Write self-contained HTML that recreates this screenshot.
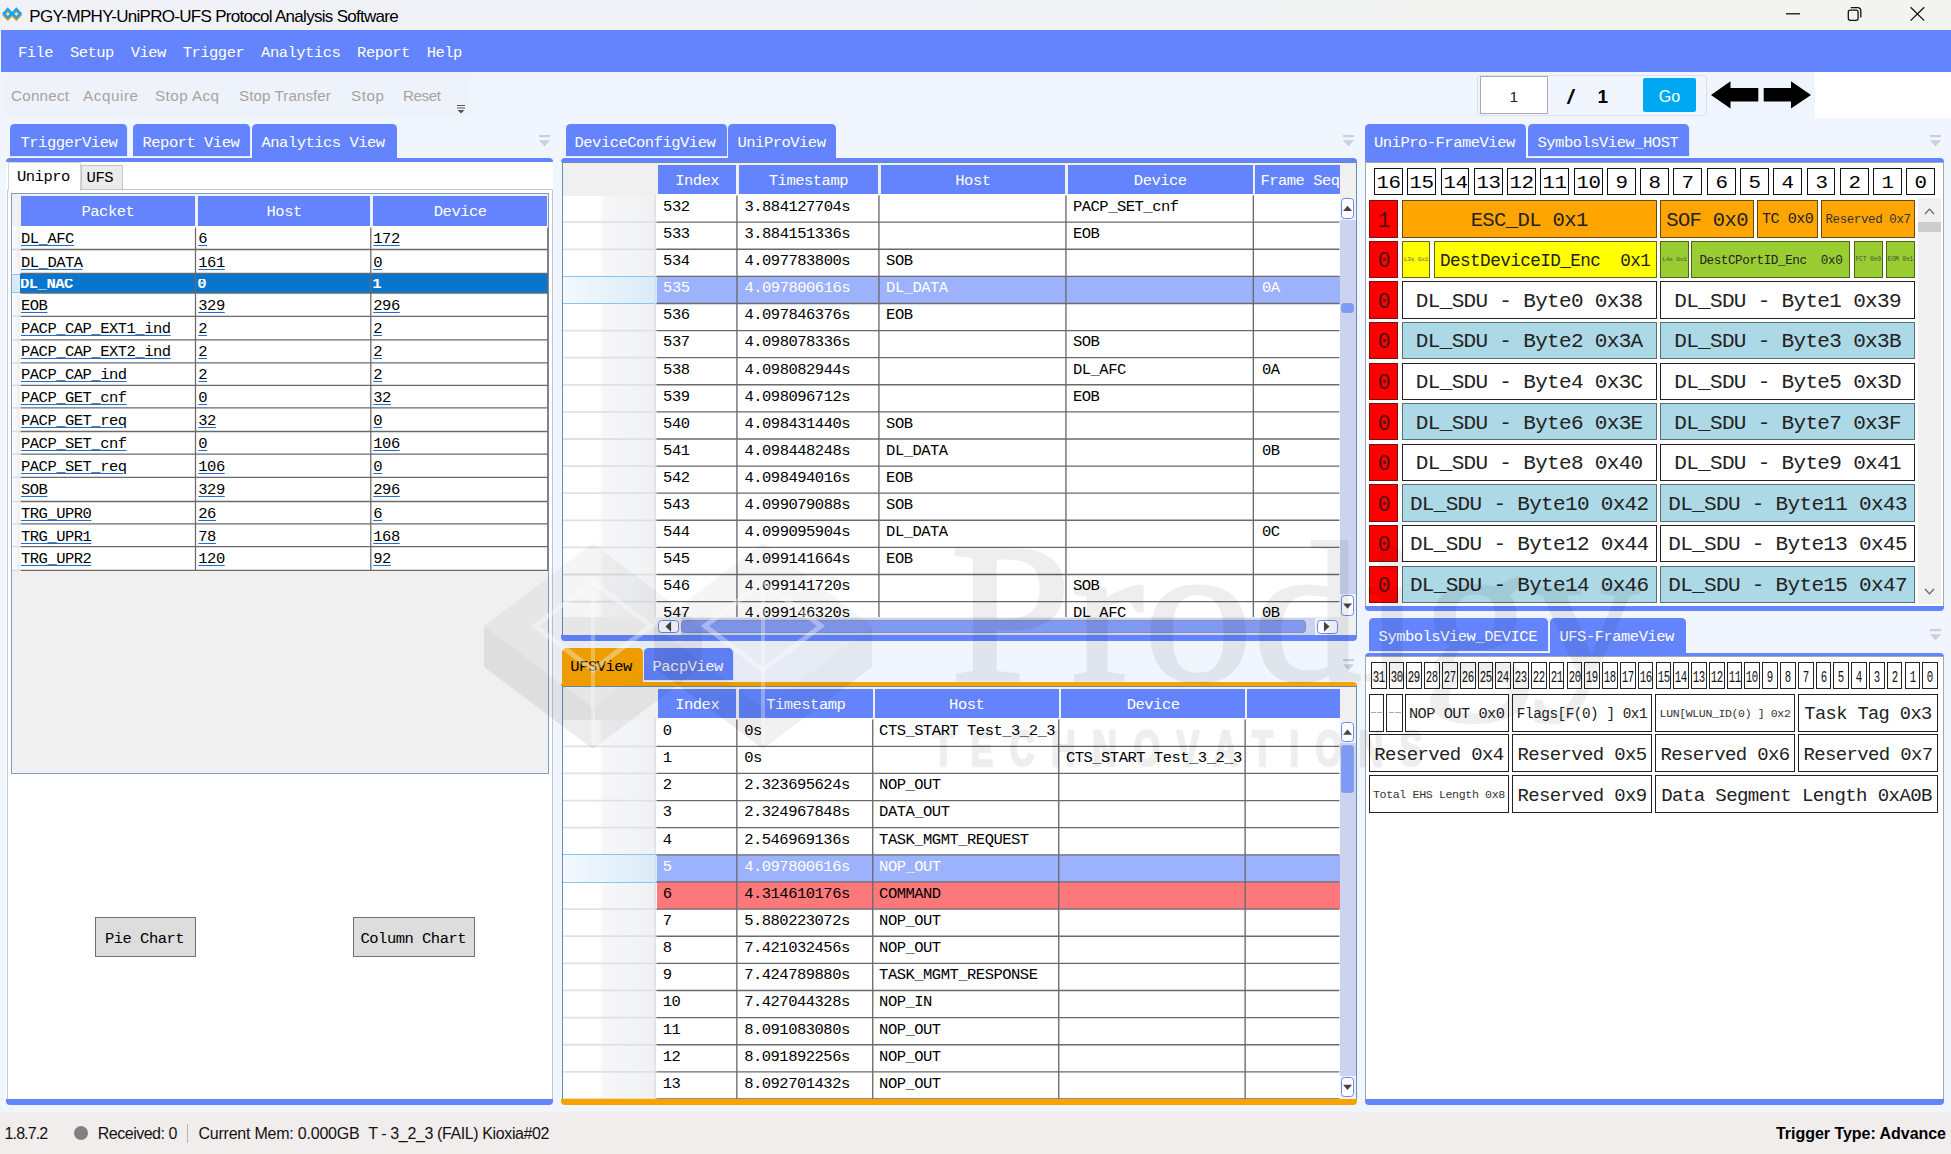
<!DOCTYPE html>
<html><head><meta charset="utf-8"><title>PGY-MPHY-UniPRO-UFS Protocol Analysis Software</title>
<style>
html,body{margin:0;padding:0;}
body{width:1951px;height:1154px;overflow:hidden;background:#f1f5fe;position:relative;font-family:"Liberation Mono",monospace;}
div{position:absolute;box-sizing:border-box;}
.m{font-family:"Liberation Mono",monospace;white-space:pre;}
.s{font-family:"Liberation Sans",sans-serif;white-space:pre;}
svg{position:absolute;overflow:visible;}
</style></head><body>
<div style="left:0.00px;top:0.00px;width:1951.00px;height:30.00px;background:linear-gradient(90deg,#f0f2f8 0%,#f0f2f8 45%,#f3f4ef 85%,#f3f4ef 100%);"></div>
<svg style="left:0;top:0" width="26" height="30" viewBox="0 0 26 30">
<g fill="none" stroke-width="2.4" stroke-linejoin="miter">
<path d="M7.8 10.9 L11.9 15.2 L7.8 19.5 L3.7 15.2 Z M16.4 10.9 L20.5 15.2 L16.4 19.5 L12.3 15.2 Z" stroke="#ff9a1f"/>
<path d="M7.8 9.1 L11.9 13.4 L7.8 17.7 L3.7 13.4 Z M16.4 9.1 L20.5 13.4 L16.4 17.7 L12.3 13.4 Z" stroke="#12a6f5"/>
</g></svg>
<div class="s" style="left:29.30px;top:5.90px;height:22px;line-height:22px;font-size:17.00px;letter-spacing:-0.705px;color:#000;">PGY-MPHY-UniPRO-UFS Protocol Analysis Software</div>
<svg style="left:1780px;top:0" width="171" height="30" viewBox="0 0 171 30">
<g fill="none" stroke="#111" stroke-width="1.3">
<path d="M6 13.8 H20"/>
<rect x="68.3" y="10.1" width="9.8" height="10.2" rx="2"/>
<path d="M70.8 7.6 H77.6 Q80.8 7.6 80.8 10.8 V17.6"/>
<path d="M130.6 7.3 L144.2 20.6 M144.2 7.3 L130.6 20.6"/>
</g></svg>
<div style="left:1.00px;top:30.00px;width:1950.00px;height:42.00px;background:#6384fd;"></div>
<div class="m" style="left:17.90px;top:42.98px;height:20px;line-height:20px;font-size:15.49px;letter-spacing:-0.496px;color:#fff;">File</div>
<div class="m" style="left:69.90px;top:42.98px;height:20px;line-height:20px;font-size:15.49px;letter-spacing:-0.496px;color:#fff;">Setup</div>
<div class="m" style="left:130.70px;top:42.98px;height:20px;line-height:20px;font-size:15.49px;letter-spacing:-0.496px;color:#fff;">View</div>
<div class="m" style="left:182.70px;top:42.98px;height:20px;line-height:20px;font-size:15.49px;letter-spacing:-0.496px;color:#fff;">Trigger</div>
<div class="m" style="left:261.10px;top:42.98px;height:20px;line-height:20px;font-size:15.49px;letter-spacing:-0.496px;color:#fff;">Analytics</div>
<div class="m" style="left:357.10px;top:42.98px;height:20px;line-height:20px;font-size:15.49px;letter-spacing:-0.496px;color:#fff;">Report</div>
<div class="m" style="left:426.70px;top:42.98px;height:20px;line-height:20px;font-size:15.49px;letter-spacing:-0.496px;color:#fff;">Help</div>
<div style="left:0.00px;top:72.00px;width:1951.00px;height:46.00px;background:#f0f4fd;"></div>
<div style="left:5.00px;top:73.00px;width:464.00px;height:44.00px;background:#eef3fb;"></div>
<div class="s" style="left:11.00px;top:86.50px;height:18px;line-height:18px;font-size:15.20px;letter-spacing:0.231px;color:#a8a29f;">Connect</div>
<div class="s" style="left:83.00px;top:86.50px;height:18px;line-height:18px;font-size:15.20px;letter-spacing:0.577px;color:#a8a29f;">Acquire</div>
<div class="s" style="left:155.00px;top:86.50px;height:18px;line-height:18px;font-size:15.20px;letter-spacing:0.451px;color:#a8a29f;">Stop Acq</div>
<div class="s" style="left:239.00px;top:86.50px;height:18px;line-height:18px;font-size:15.20px;letter-spacing:0.063px;color:#a8a29f;">Stop Transfer</div>
<div class="s" style="left:351.00px;top:86.50px;height:18px;line-height:18px;font-size:15.20px;letter-spacing:0.577px;color:#a8a29f;">Stop</div>
<div class="s" style="left:403.00px;top:86.50px;height:18px;line-height:18px;font-size:15.20px;letter-spacing:-0.427px;color:#a8a29f;">Reset</div>
<svg style="left:456.3px;top:104.3px" width="10" height="10" viewBox="0 0 10 10"><path d="M1 1.5H9M1 4H9" stroke="#555" stroke-width="1.2" fill="none"/><path d="M1.5 6 H8.5 L5 9.5Z" fill="#555"/></svg>
<div style="left:1477.00px;top:74.50px;width:230.00px;height:41.00px;border:1px solid #dcdfe6;border-radius:4px;background:#f1f5fe;"></div>
<div style="left:1480.00px;top:76.40px;width:67.50px;height:37.40px;background:#fff;border:1px solid #ababab;"></div>
<div class="s" style="left:1480.00px;top:87.30px;height:20px;line-height:20px;font-size:15.50px;letter-spacing:0.000px;color:#222;width:67.50px;text-align:center;">1</div>
<div class="s" style="left:1567.50px;top:83.60px;height:26px;line-height:26px;font-size:21.00px;letter-spacing:0.000px;color:#000;font-weight:bold;font-style:italic;">/</div>
<div class="s" style="left:1597.50px;top:84.60px;height:24px;line-height:24px;font-size:19.00px;letter-spacing:0.000px;color:#000;font-weight:bold;">1</div>
<div style="left:1643.00px;top:78.40px;width:53.00px;height:33.30px;background:#00a8f3;border-radius:2px;"></div>
<div class="s" style="left:1643.00px;top:86.50px;height:20px;line-height:20px;font-size:16.00px;letter-spacing:0.000px;color:#fff;width:53.00px;text-align:center;">Go</div>
<svg style="left:1710px;top:80px" width="102" height="30" viewBox="0 0 102 30">
<path d="M1 15 L20.5 1.3 V8 H48.3 V21.6 H20.5 V28.6 Z" fill="#000"/>
<path d="M101 15 L81 1.3 V8 H53.7 V21.6 H81 V28.6 Z" fill="#000"/></svg>
<div style="left:1815.00px;top:72.00px;width:136.00px;height:46.00px;background:#fff;"></div>
<div style="left:6.00px;top:158.00px;width:547.00px;height:4.30px;background:#6384fd;border-radius:4px 4px 0 0;"></div>
<div style="left:6.40px;top:161.80px;width:546.20px;height:937.20px;background:#fff;"></div>
<div style="left:6.00px;top:1099.00px;width:547.00px;height:5.50px;background:#6384fd;border-radius:0 0 4px 4px;"></div>
<div style="left:7.20px;top:189.20px;width:545.60px;height:909.80px;border:1.4px solid #c6c6c6;border-bottom:none;border-radius:2px 2px 0 0;"></div>
<div style="left:10.00px;top:124.00px;width:118.30px;height:33.20px;background:#6384fd;border-radius:4.5px 5px 0 0;border-right:1px solid #e3eafd;border-bottom:1.3px solid #e3eafd;"></div>
<div class="m" style="left:20.50px;top:132.58px;height:20px;line-height:20px;font-size:15.49px;letter-spacing:-0.496px;color:#fff;">TriggerView</div>
<div style="left:133.00px;top:124.00px;width:118.00px;height:33.20px;background:#6384fd;border-radius:4.5px 5px 0 0;border-right:1px solid #e3eafd;border-bottom:1.3px solid #e3eafd;"></div>
<div class="m" style="left:142.50px;top:132.58px;height:20px;line-height:20px;font-size:15.49px;letter-spacing:-0.496px;color:#fff;">Report View</div>
<div style="left:252.00px;top:124.00px;width:144.50px;height:36.00px;background:#6384fd;border-radius:4.5px 4.5px 0 0;"></div>
<div class="m" style="left:261.50px;top:132.58px;height:20px;line-height:20px;font-size:15.49px;letter-spacing:-0.496px;color:#fff;">Analytics View</div>
<svg style="left:538.9px;top:134.9px" width="12" height="12" viewBox="0 0 12 12"><rect x="0" y="0" width="11" height="2.2" fill="#c9cfdb"/><path d="M0 5.2 H11 L5.5 11.2Z" fill="#c9cfdb"/></svg>
<div style="left:7.50px;top:162.30px;width:73.50px;height:28.70px;background:#fff;border:1px solid #d5d5d5;border-bottom:none;"></div>
<div class="m" style="left:17.00px;top:166.98px;height:20px;line-height:20px;font-size:15.49px;letter-spacing:-0.496px;color:#000;">Unipro</div>
<div style="left:81.00px;top:165.20px;width:41.50px;height:25.00px;background:#ebebeb;border:1px solid #c4c4c4;"></div>
<div class="m" style="left:86.60px;top:168.18px;height:20px;line-height:20px;font-size:15.49px;letter-spacing:-0.496px;color:#000;">UFS</div>
<div style="left:11.00px;top:193.00px;width:538.00px;height:580.50px;background:#f0f0f0;border:1px solid #7b9bcb;"></div>
<div style="left:20.80px;top:196.00px;width:174.20px;height:29.80px;background:#6384fd;"></div>
<div class="m" style="left:20.80px;top:201.58px;height:20px;line-height:20px;font-size:15.49px;letter-spacing:-0.496px;color:#fff;width:174.20px;text-align:center;">Packet</div>
<div style="left:198.00px;top:196.00px;width:172.30px;height:29.80px;background:#6384fd;"></div>
<div class="m" style="left:198.00px;top:201.58px;height:20px;line-height:20px;font-size:15.49px;letter-spacing:-0.496px;color:#fff;width:172.30px;text-align:center;">Host</div>
<div style="left:373.00px;top:196.00px;width:174.40px;height:29.80px;background:#6384fd;"></div>
<div class="m" style="left:373.00px;top:201.58px;height:20px;line-height:20px;font-size:15.49px;letter-spacing:-0.496px;color:#fff;width:174.40px;text-align:center;">Device</div>
<div style="left:12.00px;top:226.00px;width:536.00px;height:345.00px;background:#fff;"></div>
<div style="left:12.00px;top:226.00px;width:8.30px;height:345.00px;background:linear-gradient(90deg,#fff,#eee);"></div>
<div class="m" style="left:21.00px;top:229.28px;height:20px;line-height:20px;font-size:15.49px;letter-spacing:-0.496px;color:#000;text-decoration:underline;text-decoration-color:#1a6fd0;text-decoration-thickness:1.2px;text-underline-offset:1.5px;">DL_AFC</div>
<div class="m" style="left:198.30px;top:229.28px;height:20px;line-height:20px;font-size:15.49px;letter-spacing:-0.496px;color:#000;text-decoration:underline;text-decoration-color:#1a6fd0;text-decoration-thickness:1.2px;text-underline-offset:1.5px;">6</div>
<div class="m" style="left:373.30px;top:229.28px;height:20px;line-height:20px;font-size:15.49px;letter-spacing:-0.496px;color:#000;text-decoration:underline;text-decoration-color:#1a6fd0;text-decoration-thickness:1.2px;text-underline-offset:1.5px;">172</div>
<div class="m" style="left:21.00px;top:252.58px;height:20px;line-height:20px;font-size:15.49px;letter-spacing:-0.496px;color:#000;text-decoration:underline;text-decoration-color:#1a6fd0;text-decoration-thickness:1.2px;text-underline-offset:1.5px;">DL_DATA</div>
<div class="m" style="left:198.30px;top:252.58px;height:20px;line-height:20px;font-size:15.49px;letter-spacing:-0.496px;color:#000;text-decoration:underline;text-decoration-color:#1a6fd0;text-decoration-thickness:1.2px;text-underline-offset:1.5px;">161</div>
<div class="m" style="left:373.30px;top:252.58px;height:20px;line-height:20px;font-size:15.49px;letter-spacing:-0.496px;color:#000;text-decoration:underline;text-decoration-color:#1a6fd0;text-decoration-thickness:1.2px;text-underline-offset:1.5px;">0</div>
<div style="left:12.00px;top:274.00px;width:536.00px;height:18.80px;background:#0a75cd;"></div>
<div style="left:12.00px;top:274.00px;width:8.30px;height:18.80px;background:#d9ebf9;border-top:1px solid #8ac7ee;border-bottom:1px solid #8ac7ee;"></div>
<div style="left:20px;top:279.4px;width:170px;height:12.4px;overflow:hidden;">
<div class="m" style="left:0.00px;top:-5.42px;height:20px;line-height:20px;font-size:15.49px;letter-spacing:-0.496px;color:#fff;font-weight:bold;">DL_NAC</div>
</div>
<div style="left:197.3px;top:279.4px;width:170px;height:12.4px;overflow:hidden;">
<div class="m" style="left:0.00px;top:-5.42px;height:20px;line-height:20px;font-size:15.49px;letter-spacing:-0.496px;color:#fff;font-weight:bold;">0</div>
</div>
<div style="left:372.3px;top:279.4px;width:170px;height:12.4px;overflow:hidden;">
<div class="m" style="left:0.00px;top:-5.42px;height:20px;line-height:20px;font-size:15.49px;letter-spacing:-0.496px;color:#fff;font-weight:bold;">1</div>
</div>
<div class="m" style="left:21.00px;top:296.28px;height:20px;line-height:20px;font-size:15.49px;letter-spacing:-0.496px;color:#000;text-decoration:underline;text-decoration-color:#1a6fd0;text-decoration-thickness:1.2px;text-underline-offset:1.5px;">EOB</div>
<div class="m" style="left:198.30px;top:296.28px;height:20px;line-height:20px;font-size:15.49px;letter-spacing:-0.496px;color:#000;text-decoration:underline;text-decoration-color:#1a6fd0;text-decoration-thickness:1.2px;text-underline-offset:1.5px;">329</div>
<div class="m" style="left:373.30px;top:296.28px;height:20px;line-height:20px;font-size:15.49px;letter-spacing:-0.496px;color:#000;text-decoration:underline;text-decoration-color:#1a6fd0;text-decoration-thickness:1.2px;text-underline-offset:1.5px;">296</div>
<div class="m" style="left:21.00px;top:319.28px;height:20px;line-height:20px;font-size:15.49px;letter-spacing:-0.496px;color:#000;text-decoration:underline;text-decoration-color:#1a6fd0;text-decoration-thickness:1.2px;text-underline-offset:1.5px;">PACP_CAP_EXT1_ind</div>
<div class="m" style="left:198.30px;top:319.28px;height:20px;line-height:20px;font-size:15.49px;letter-spacing:-0.496px;color:#000;text-decoration:underline;text-decoration-color:#1a6fd0;text-decoration-thickness:1.2px;text-underline-offset:1.5px;">2</div>
<div class="m" style="left:373.30px;top:319.28px;height:20px;line-height:20px;font-size:15.49px;letter-spacing:-0.496px;color:#000;text-decoration:underline;text-decoration-color:#1a6fd0;text-decoration-thickness:1.2px;text-underline-offset:1.5px;">2</div>
<div class="m" style="left:21.00px;top:342.28px;height:20px;line-height:20px;font-size:15.49px;letter-spacing:-0.496px;color:#000;text-decoration:underline;text-decoration-color:#1a6fd0;text-decoration-thickness:1.2px;text-underline-offset:1.5px;">PACP_CAP_EXT2_ind</div>
<div class="m" style="left:198.30px;top:342.28px;height:20px;line-height:20px;font-size:15.49px;letter-spacing:-0.496px;color:#000;text-decoration:underline;text-decoration-color:#1a6fd0;text-decoration-thickness:1.2px;text-underline-offset:1.5px;">2</div>
<div class="m" style="left:373.30px;top:342.28px;height:20px;line-height:20px;font-size:15.49px;letter-spacing:-0.496px;color:#000;text-decoration:underline;text-decoration-color:#1a6fd0;text-decoration-thickness:1.2px;text-underline-offset:1.5px;">2</div>
<div class="m" style="left:21.00px;top:365.18px;height:20px;line-height:20px;font-size:15.49px;letter-spacing:-0.496px;color:#000;text-decoration:underline;text-decoration-color:#1a6fd0;text-decoration-thickness:1.2px;text-underline-offset:1.5px;">PACP_CAP_ind</div>
<div class="m" style="left:198.30px;top:365.18px;height:20px;line-height:20px;font-size:15.49px;letter-spacing:-0.496px;color:#000;text-decoration:underline;text-decoration-color:#1a6fd0;text-decoration-thickness:1.2px;text-underline-offset:1.5px;">2</div>
<div class="m" style="left:373.30px;top:365.18px;height:20px;line-height:20px;font-size:15.49px;letter-spacing:-0.496px;color:#000;text-decoration:underline;text-decoration-color:#1a6fd0;text-decoration-thickness:1.2px;text-underline-offset:1.5px;">2</div>
<div class="m" style="left:21.00px;top:388.08px;height:20px;line-height:20px;font-size:15.49px;letter-spacing:-0.496px;color:#000;text-decoration:underline;text-decoration-color:#1a6fd0;text-decoration-thickness:1.2px;text-underline-offset:1.5px;">PACP_GET_cnf</div>
<div class="m" style="left:198.30px;top:388.08px;height:20px;line-height:20px;font-size:15.49px;letter-spacing:-0.496px;color:#000;text-decoration:underline;text-decoration-color:#1a6fd0;text-decoration-thickness:1.2px;text-underline-offset:1.5px;">0</div>
<div class="m" style="left:373.30px;top:388.08px;height:20px;line-height:20px;font-size:15.49px;letter-spacing:-0.496px;color:#000;text-decoration:underline;text-decoration-color:#1a6fd0;text-decoration-thickness:1.2px;text-underline-offset:1.5px;">32</div>
<div class="m" style="left:21.00px;top:411.18px;height:20px;line-height:20px;font-size:15.49px;letter-spacing:-0.496px;color:#000;text-decoration:underline;text-decoration-color:#1a6fd0;text-decoration-thickness:1.2px;text-underline-offset:1.5px;">PACP_GET_req</div>
<div class="m" style="left:198.30px;top:411.18px;height:20px;line-height:20px;font-size:15.49px;letter-spacing:-0.496px;color:#000;text-decoration:underline;text-decoration-color:#1a6fd0;text-decoration-thickness:1.2px;text-underline-offset:1.5px;">32</div>
<div class="m" style="left:373.30px;top:411.18px;height:20px;line-height:20px;font-size:15.49px;letter-spacing:-0.496px;color:#000;text-decoration:underline;text-decoration-color:#1a6fd0;text-decoration-thickness:1.2px;text-underline-offset:1.5px;">0</div>
<div class="m" style="left:21.00px;top:434.18px;height:20px;line-height:20px;font-size:15.49px;letter-spacing:-0.496px;color:#000;text-decoration:underline;text-decoration-color:#1a6fd0;text-decoration-thickness:1.2px;text-underline-offset:1.5px;">PACP_SET_cnf</div>
<div class="m" style="left:198.30px;top:434.18px;height:20px;line-height:20px;font-size:15.49px;letter-spacing:-0.496px;color:#000;text-decoration:underline;text-decoration-color:#1a6fd0;text-decoration-thickness:1.2px;text-underline-offset:1.5px;">0</div>
<div class="m" style="left:373.30px;top:434.18px;height:20px;line-height:20px;font-size:15.49px;letter-spacing:-0.496px;color:#000;text-decoration:underline;text-decoration-color:#1a6fd0;text-decoration-thickness:1.2px;text-underline-offset:1.5px;">106</div>
<div class="m" style="left:21.00px;top:457.18px;height:20px;line-height:20px;font-size:15.49px;letter-spacing:-0.496px;color:#000;text-decoration:underline;text-decoration-color:#1a6fd0;text-decoration-thickness:1.2px;text-underline-offset:1.5px;">PACP_SET_req</div>
<div class="m" style="left:198.30px;top:457.18px;height:20px;line-height:20px;font-size:15.49px;letter-spacing:-0.496px;color:#000;text-decoration:underline;text-decoration-color:#1a6fd0;text-decoration-thickness:1.2px;text-underline-offset:1.5px;">106</div>
<div class="m" style="left:373.30px;top:457.18px;height:20px;line-height:20px;font-size:15.49px;letter-spacing:-0.496px;color:#000;text-decoration:underline;text-decoration-color:#1a6fd0;text-decoration-thickness:1.2px;text-underline-offset:1.5px;">0</div>
<div class="m" style="left:21.00px;top:480.18px;height:20px;line-height:20px;font-size:15.49px;letter-spacing:-0.496px;color:#000;text-decoration:underline;text-decoration-color:#1a6fd0;text-decoration-thickness:1.2px;text-underline-offset:1.5px;">SOB</div>
<div class="m" style="left:198.30px;top:480.18px;height:20px;line-height:20px;font-size:15.49px;letter-spacing:-0.496px;color:#000;text-decoration:underline;text-decoration-color:#1a6fd0;text-decoration-thickness:1.2px;text-underline-offset:1.5px;">329</div>
<div class="m" style="left:373.30px;top:480.18px;height:20px;line-height:20px;font-size:15.49px;letter-spacing:-0.496px;color:#000;text-decoration:underline;text-decoration-color:#1a6fd0;text-decoration-thickness:1.2px;text-underline-offset:1.5px;">296</div>
<div class="m" style="left:21.00px;top:503.98px;height:20px;line-height:20px;font-size:15.49px;letter-spacing:-0.496px;color:#000;text-decoration:underline;text-decoration-color:#1a6fd0;text-decoration-thickness:1.2px;text-underline-offset:1.5px;">TRG_UPR0</div>
<div class="m" style="left:198.30px;top:503.98px;height:20px;line-height:20px;font-size:15.49px;letter-spacing:-0.496px;color:#000;text-decoration:underline;text-decoration-color:#1a6fd0;text-decoration-thickness:1.2px;text-underline-offset:1.5px;">26</div>
<div class="m" style="left:373.30px;top:503.98px;height:20px;line-height:20px;font-size:15.49px;letter-spacing:-0.496px;color:#000;text-decoration:underline;text-decoration-color:#1a6fd0;text-decoration-thickness:1.2px;text-underline-offset:1.5px;">6</div>
<div class="m" style="left:21.00px;top:526.58px;height:20px;line-height:20px;font-size:15.49px;letter-spacing:-0.496px;color:#000;text-decoration:underline;text-decoration-color:#1a6fd0;text-decoration-thickness:1.2px;text-underline-offset:1.5px;">TRG_UPR1</div>
<div class="m" style="left:198.30px;top:526.58px;height:20px;line-height:20px;font-size:15.49px;letter-spacing:-0.496px;color:#000;text-decoration:underline;text-decoration-color:#1a6fd0;text-decoration-thickness:1.2px;text-underline-offset:1.5px;">78</div>
<div class="m" style="left:373.30px;top:526.58px;height:20px;line-height:20px;font-size:15.49px;letter-spacing:-0.496px;color:#000;text-decoration:underline;text-decoration-color:#1a6fd0;text-decoration-thickness:1.2px;text-underline-offset:1.5px;">168</div>
<div class="m" style="left:21.00px;top:549.48px;height:20px;line-height:20px;font-size:15.49px;letter-spacing:-0.496px;color:#000;text-decoration:underline;text-decoration-color:#1a6fd0;text-decoration-thickness:1.2px;text-underline-offset:1.5px;">TRG_UPR2</div>
<div class="m" style="left:198.30px;top:549.48px;height:20px;line-height:20px;font-size:15.49px;letter-spacing:-0.496px;color:#000;text-decoration:underline;text-decoration-color:#1a6fd0;text-decoration-thickness:1.2px;text-underline-offset:1.5px;">120</div>
<div class="m" style="left:373.30px;top:549.48px;height:20px;line-height:20px;font-size:15.49px;letter-spacing:-0.496px;color:#000;text-decoration:underline;text-decoration-color:#1a6fd0;text-decoration-thickness:1.2px;text-underline-offset:1.5px;">92</div>
<svg style="left:0;top:0" width="560" height="600" viewBox="0 0 560 600"><line x1="20.5" y1="249.50" x2="548" y2="249.50" stroke="#6a6a6a" stroke-width="1.3"/><line x1="12" y1="249.50" x2="20.3" y2="249.50" stroke="#dcdcdc" stroke-width="1.5"/><line x1="20.5" y1="273.30" x2="548" y2="273.30" stroke="#6a6a6a" stroke-width="1.3"/><line x1="20.5" y1="293.10" x2="548" y2="293.10" stroke="#6a6a6a" stroke-width="1.3"/><line x1="20.5" y1="316.30" x2="548" y2="316.30" stroke="#6a6a6a" stroke-width="1.3"/><line x1="12" y1="316.30" x2="20.3" y2="316.30" stroke="#dcdcdc" stroke-width="1.5"/><line x1="20.5" y1="339.90" x2="548" y2="339.90" stroke="#6a6a6a" stroke-width="1.3"/><line x1="12" y1="339.90" x2="20.3" y2="339.90" stroke="#dcdcdc" stroke-width="1.5"/><line x1="20.5" y1="362.80" x2="548" y2="362.80" stroke="#6a6a6a" stroke-width="1.3"/><line x1="12" y1="362.80" x2="20.3" y2="362.80" stroke="#dcdcdc" stroke-width="1.5"/><line x1="20.5" y1="385.30" x2="548" y2="385.30" stroke="#6a6a6a" stroke-width="1.3"/><line x1="12" y1="385.30" x2="20.3" y2="385.30" stroke="#dcdcdc" stroke-width="1.5"/><line x1="20.5" y1="407.90" x2="548" y2="407.90" stroke="#6a6a6a" stroke-width="1.3"/><line x1="12" y1="407.90" x2="20.3" y2="407.90" stroke="#dcdcdc" stroke-width="1.5"/><line x1="20.5" y1="431.50" x2="548" y2="431.50" stroke="#6a6a6a" stroke-width="1.3"/><line x1="12" y1="431.50" x2="20.3" y2="431.50" stroke="#dcdcdc" stroke-width="1.5"/><line x1="20.5" y1="454.20" x2="548" y2="454.20" stroke="#6a6a6a" stroke-width="1.3"/><line x1="12" y1="454.20" x2="20.3" y2="454.20" stroke="#dcdcdc" stroke-width="1.5"/><line x1="20.5" y1="477.30" x2="548" y2="477.30" stroke="#6a6a6a" stroke-width="1.3"/><line x1="12" y1="477.30" x2="20.3" y2="477.30" stroke="#dcdcdc" stroke-width="1.5"/><line x1="20.5" y1="501.50" x2="548" y2="501.50" stroke="#6a6a6a" stroke-width="1.3"/><line x1="12" y1="501.50" x2="20.3" y2="501.50" stroke="#dcdcdc" stroke-width="1.5"/><line x1="20.5" y1="523.80" x2="548" y2="523.80" stroke="#6a6a6a" stroke-width="1.3"/><line x1="12" y1="523.80" x2="20.3" y2="523.80" stroke="#dcdcdc" stroke-width="1.5"/><line x1="20.5" y1="546.60" x2="548" y2="546.60" stroke="#6a6a6a" stroke-width="1.3"/><line x1="12" y1="546.60" x2="20.3" y2="546.60" stroke="#dcdcdc" stroke-width="1.5"/><line x1="20.5" y1="570.30" x2="548" y2="570.30" stroke="#6a6a6a" stroke-width="1.3"/><line x1="12" y1="570.30" x2="20.3" y2="570.30" stroke="#dcdcdc" stroke-width="1.5"/><line x1="195.5" y1="227.5" x2="195.5" y2="570.6" stroke="#6a6a6a" stroke-width="1.25"/><line x1="370.8" y1="227.5" x2="370.8" y2="570.6" stroke="#6a6a6a" stroke-width="1.25"/><line x1="547.8" y1="227.5" x2="547.8" y2="570.6" stroke="#6a6a6a" stroke-width="1.25"/></svg>
<div style="left:95.00px;top:916.80px;width:101.00px;height:40.00px;background:#dddddd;border:1px solid #707070;"></div>
<div class="m" style="left:94.00px;top:928.78px;height:20px;line-height:20px;font-size:15.49px;letter-spacing:-0.496px;color:#000;width:101.00px;text-align:center;">Pie Chart</div>
<div style="left:353.40px;top:916.80px;width:121.40px;height:40.00px;background:#dddddd;border:1px solid #707070;"></div>
<div class="m" style="left:352.60px;top:928.78px;height:20px;line-height:20px;font-size:15.49px;letter-spacing:-0.496px;color:#000;width:121.40px;text-align:center;">Column Chart</div>
<div style="left:561.40px;top:158.00px;width:795.80px;height:4.30px;background:#6384fd;border-radius:4px 4px 0 0;"></div>
<div style="left:561.80px;top:161.80px;width:795.00px;height:473.20px;background:#fff;border:1.3px solid #688caf;border-bottom:none;"></div>
<div style="left:561.40px;top:635.00px;width:795.80px;height:5.50px;background:#6384fd;border-radius:0 0 4px 4px;"></div>
<div style="left:566.00px;top:124.00px;width:161.80px;height:33.20px;background:#6384fd;border-radius:4.5px 5px 0 0;border-right:1px solid #e3eafd;border-bottom:1.3px solid #e3eafd;"></div>
<div class="m" style="left:574.50px;top:132.58px;height:20px;line-height:20px;font-size:15.49px;letter-spacing:-0.496px;color:#fff;">DeviceConfigView</div>
<div style="left:728.40px;top:124.00px;width:107.80px;height:36.00px;background:#6384fd;border-radius:4.5px 4.5px 0 0;"></div>
<div class="m" style="left:737.50px;top:132.58px;height:20px;line-height:20px;font-size:15.49px;letter-spacing:-0.496px;color:#fff;">UniProView</div>
<svg style="left:1343.1px;top:134.9px" width="12" height="12" viewBox="0 0 12 12"><rect x="0" y="0" width="11" height="2.2" fill="#c9cfdb"/><path d="M0 5.2 H11 L5.5 11.2Z" fill="#c9cfdb"/></svg>
<div style="left:563.30px;top:163.00px;width:792.70px;height:31.70px;background:#f0f0f0;"></div>
<div style="left:658.00px;top:165.20px;width:78.30px;height:28.50px;background:#6384fd;overflow:hidden;"></div>
<div class="m" style="left:658.00px;top:170.73px;height:20px;line-height:20px;font-size:15.49px;letter-spacing:-0.496px;color:#fff;width:78.30px;text-align:center;">Index</div>
<div style="left:739.00px;top:165.20px;width:138.80px;height:28.50px;background:#6384fd;overflow:hidden;"></div>
<div class="m" style="left:739.00px;top:170.73px;height:20px;line-height:20px;font-size:15.49px;letter-spacing:-0.496px;color:#fff;width:138.80px;text-align:center;">Timestamp</div>
<div style="left:881.00px;top:165.20px;width:183.80px;height:28.50px;background:#6384fd;overflow:hidden;"></div>
<div class="m" style="left:881.00px;top:170.73px;height:20px;line-height:20px;font-size:15.49px;letter-spacing:-0.496px;color:#fff;width:183.80px;text-align:center;">Host</div>
<div style="left:1068.00px;top:165.20px;width:184.50px;height:28.50px;background:#6384fd;overflow:hidden;"></div>
<div class="m" style="left:1068.00px;top:170.73px;height:20px;line-height:20px;font-size:15.49px;letter-spacing:-0.496px;color:#fff;width:184.50px;text-align:center;">Device</div>
<div style="left:1255.40px;top:165.20px;width:84.20px;height:28.50px;background:#6384fd;overflow:hidden;"></div>
<div class="m" style="left:1260.40px;top:170.73px;height:20px;line-height:20px;font-size:15.49px;letter-spacing:-0.496px;color:#fff;width:79.20px;text-align:left;overflow:hidden;">Frame Seq</div>
<div style="left:563.3px;top:194.10px;width:776.4px;height:423.20px;overflow:hidden;background:#fff;">
<div style="left:0.00px;top:0.00px;width:92.40px;height:423.20px;background:linear-gradient(90deg,#fff 0%,#fff 38%,#f6f6f8 44%,#f3f4f6 75%,#f0f0f2 100%);"></div>
<div style="left:0.00px;top:0.00px;width:93.00px;height:2.20px;background:#f0f0f0;"></div>
<div style="left:93.40px;top:82.40px;width:683.00px;height:27.10px;background:#9db2fc;"></div>
<div style="left:0.00px;top:81.80px;width:93.40px;height:28.30px;background:linear-gradient(90deg,#f3f9fd,#d9ebf8);border-top:1.3px solid #86c6ee;border-bottom:1.3px solid #86c6ee;"></div>
<svg style="left:0;top:0" width="776.4" height="423.20" viewBox="0 0 776.4 423.20"><line x1="0" y1="28.20" x2="92.4" y2="28.20" stroke="#e1e1e1" stroke-width="1.8"/><line x1="93.4" y1="28.20" x2="776.4" y2="28.20" stroke="#6a6a6a" stroke-width="1.35"/><line x1="0" y1="55.30" x2="92.4" y2="55.30" stroke="#e1e1e1" stroke-width="1.8"/><line x1="93.4" y1="55.30" x2="776.4" y2="55.30" stroke="#6a6a6a" stroke-width="1.35"/><line x1="93.4" y1="82.40" x2="776.4" y2="82.40" stroke="#6a6a6a" stroke-width="1.35"/><line x1="93.4" y1="109.50" x2="776.4" y2="109.50" stroke="#6a6a6a" stroke-width="1.35"/><line x1="0" y1="136.60" x2="92.4" y2="136.60" stroke="#e1e1e1" stroke-width="1.8"/><line x1="93.4" y1="136.60" x2="776.4" y2="136.60" stroke="#6a6a6a" stroke-width="1.35"/><line x1="0" y1="163.70" x2="92.4" y2="163.70" stroke="#e1e1e1" stroke-width="1.8"/><line x1="93.4" y1="163.70" x2="776.4" y2="163.70" stroke="#6a6a6a" stroke-width="1.35"/><line x1="0" y1="190.80" x2="92.4" y2="190.80" stroke="#e1e1e1" stroke-width="1.8"/><line x1="93.4" y1="190.80" x2="776.4" y2="190.80" stroke="#6a6a6a" stroke-width="1.35"/><line x1="0" y1="217.90" x2="92.4" y2="217.90" stroke="#e1e1e1" stroke-width="1.8"/><line x1="93.4" y1="217.90" x2="776.4" y2="217.90" stroke="#6a6a6a" stroke-width="1.35"/><line x1="0" y1="245.00" x2="92.4" y2="245.00" stroke="#e1e1e1" stroke-width="1.8"/><line x1="93.4" y1="245.00" x2="776.4" y2="245.00" stroke="#6a6a6a" stroke-width="1.35"/><line x1="0" y1="272.10" x2="92.4" y2="272.10" stroke="#e1e1e1" stroke-width="1.8"/><line x1="93.4" y1="272.10" x2="776.4" y2="272.10" stroke="#6a6a6a" stroke-width="1.35"/><line x1="0" y1="299.20" x2="92.4" y2="299.20" stroke="#e1e1e1" stroke-width="1.8"/><line x1="93.4" y1="299.20" x2="776.4" y2="299.20" stroke="#6a6a6a" stroke-width="1.35"/><line x1="0" y1="326.30" x2="92.4" y2="326.30" stroke="#e1e1e1" stroke-width="1.8"/><line x1="93.4" y1="326.30" x2="776.4" y2="326.30" stroke="#6a6a6a" stroke-width="1.35"/><line x1="0" y1="353.40" x2="92.4" y2="353.40" stroke="#e1e1e1" stroke-width="1.8"/><line x1="93.4" y1="353.40" x2="776.4" y2="353.40" stroke="#6a6a6a" stroke-width="1.35"/><line x1="0" y1="380.50" x2="92.4" y2="380.50" stroke="#e1e1e1" stroke-width="1.8"/><line x1="93.4" y1="380.50" x2="776.4" y2="380.50" stroke="#6a6a6a" stroke-width="1.35"/><line x1="0" y1="407.60" x2="92.4" y2="407.60" stroke="#e1e1e1" stroke-width="1.8"/><line x1="93.4" y1="407.60" x2="776.4" y2="407.60" stroke="#6a6a6a" stroke-width="1.35"/><line x1="0" y1="434.70" x2="92.4" y2="434.70" stroke="#e1e1e1" stroke-width="1.8"/><line x1="93.4" y1="434.70" x2="776.4" y2="434.70" stroke="#6a6a6a" stroke-width="1.35"/><line x1="173.95" y1="1.5" x2="173.95" y2="423.20" stroke="#6a6a6a" stroke-width="1.35"/><line x1="315.95" y1="1.5" x2="315.95" y2="423.20" stroke="#6a6a6a" stroke-width="1.35"/><line x1="502.95" y1="1.5" x2="502.95" y2="423.20" stroke="#6a6a6a" stroke-width="1.35"/><line x1="690.35" y1="1.5" x2="690.35" y2="423.20" stroke="#6a6a6a" stroke-width="1.35"/><line x1="92.10000000000001" y1="0" x2="92.10000000000001" y2="423.20" stroke="#d8d8da" stroke-width="1"/></svg>
<div style="left:99.80px;top:-0.15px;width:71.70px;height:24px;overflow:hidden;">
<div class="m" style="left:0.00px;top:2.98px;height:20px;line-height:20px;font-size:15.49px;letter-spacing:-0.496px;color:#000;">532</div>
</div>
<div style="left:181.20px;top:-0.15px;width:131.80px;height:24px;overflow:hidden;">
<div class="m" style="left:0.00px;top:2.98px;height:20px;line-height:20px;font-size:15.49px;letter-spacing:-0.496px;color:#000;">3.884127704s</div>
</div>
<div style="left:509.70px;top:-0.15px;width:178.00px;height:24px;overflow:hidden;">
<div class="m" style="left:0.00px;top:2.98px;height:20px;line-height:20px;font-size:15.49px;letter-spacing:-0.496px;color:#000;">PACP_SET_cnf</div>
</div>
<div style="left:99.80px;top:26.95px;width:71.70px;height:24px;overflow:hidden;">
<div class="m" style="left:0.00px;top:2.98px;height:20px;line-height:20px;font-size:15.49px;letter-spacing:-0.496px;color:#000;">533</div>
</div>
<div style="left:181.20px;top:26.95px;width:131.80px;height:24px;overflow:hidden;">
<div class="m" style="left:0.00px;top:2.98px;height:20px;line-height:20px;font-size:15.49px;letter-spacing:-0.496px;color:#000;">3.884151336s</div>
</div>
<div style="left:509.70px;top:26.95px;width:178.00px;height:24px;overflow:hidden;">
<div class="m" style="left:0.00px;top:2.98px;height:20px;line-height:20px;font-size:15.49px;letter-spacing:-0.496px;color:#000;">EOB</div>
</div>
<div style="left:99.80px;top:54.05px;width:71.70px;height:24px;overflow:hidden;">
<div class="m" style="left:0.00px;top:2.98px;height:20px;line-height:20px;font-size:15.49px;letter-spacing:-0.496px;color:#000;">534</div>
</div>
<div style="left:181.20px;top:54.05px;width:131.80px;height:24px;overflow:hidden;">
<div class="m" style="left:0.00px;top:2.98px;height:20px;line-height:20px;font-size:15.49px;letter-spacing:-0.496px;color:#000;">4.097783800s</div>
</div>
<div style="left:322.80px;top:54.05px;width:177.20px;height:24px;overflow:hidden;">
<div class="m" style="left:0.00px;top:2.98px;height:20px;line-height:20px;font-size:15.49px;letter-spacing:-0.496px;color:#000;">SOB</div>
</div>
<div style="left:99.80px;top:81.15px;width:71.70px;height:24px;overflow:hidden;">
<div class="m" style="left:0.00px;top:2.98px;height:20px;line-height:20px;font-size:15.49px;letter-spacing:-0.496px;color:#fff;">535</div>
</div>
<div style="left:181.20px;top:81.15px;width:131.80px;height:24px;overflow:hidden;">
<div class="m" style="left:0.00px;top:2.98px;height:20px;line-height:20px;font-size:15.49px;letter-spacing:-0.496px;color:#fff;">4.097800616s</div>
</div>
<div style="left:322.80px;top:81.15px;width:177.20px;height:24px;overflow:hidden;">
<div class="m" style="left:0.00px;top:2.98px;height:20px;line-height:20px;font-size:15.49px;letter-spacing:-0.496px;color:#fff;">DL_DATA</div>
</div>
<div style="left:698.60px;top:81.15px;width:76.20px;height:24px;overflow:hidden;">
<div class="m" style="left:0.00px;top:2.98px;height:20px;line-height:20px;font-size:15.49px;letter-spacing:-0.496px;color:#fff;">0A</div>
</div>
<div style="left:99.80px;top:108.25px;width:71.70px;height:24px;overflow:hidden;">
<div class="m" style="left:0.00px;top:2.98px;height:20px;line-height:20px;font-size:15.49px;letter-spacing:-0.496px;color:#000;">536</div>
</div>
<div style="left:181.20px;top:108.25px;width:131.80px;height:24px;overflow:hidden;">
<div class="m" style="left:0.00px;top:2.98px;height:20px;line-height:20px;font-size:15.49px;letter-spacing:-0.496px;color:#000;">4.097846376s</div>
</div>
<div style="left:322.80px;top:108.25px;width:177.20px;height:24px;overflow:hidden;">
<div class="m" style="left:0.00px;top:2.98px;height:20px;line-height:20px;font-size:15.49px;letter-spacing:-0.496px;color:#000;">EOB</div>
</div>
<div style="left:99.80px;top:135.35px;width:71.70px;height:24px;overflow:hidden;">
<div class="m" style="left:0.00px;top:2.98px;height:20px;line-height:20px;font-size:15.49px;letter-spacing:-0.496px;color:#000;">537</div>
</div>
<div style="left:181.20px;top:135.35px;width:131.80px;height:24px;overflow:hidden;">
<div class="m" style="left:0.00px;top:2.98px;height:20px;line-height:20px;font-size:15.49px;letter-spacing:-0.496px;color:#000;">4.098078336s</div>
</div>
<div style="left:509.70px;top:135.35px;width:178.00px;height:24px;overflow:hidden;">
<div class="m" style="left:0.00px;top:2.98px;height:20px;line-height:20px;font-size:15.49px;letter-spacing:-0.496px;color:#000;">SOB</div>
</div>
<div style="left:99.80px;top:162.45px;width:71.70px;height:24px;overflow:hidden;">
<div class="m" style="left:0.00px;top:2.98px;height:20px;line-height:20px;font-size:15.49px;letter-spacing:-0.496px;color:#000;">538</div>
</div>
<div style="left:181.20px;top:162.45px;width:131.80px;height:24px;overflow:hidden;">
<div class="m" style="left:0.00px;top:2.98px;height:20px;line-height:20px;font-size:15.49px;letter-spacing:-0.496px;color:#000;">4.098082944s</div>
</div>
<div style="left:509.70px;top:162.45px;width:178.00px;height:24px;overflow:hidden;">
<div class="m" style="left:0.00px;top:2.98px;height:20px;line-height:20px;font-size:15.49px;letter-spacing:-0.496px;color:#000;">DL_AFC</div>
</div>
<div style="left:698.60px;top:162.45px;width:76.20px;height:24px;overflow:hidden;">
<div class="m" style="left:0.00px;top:2.98px;height:20px;line-height:20px;font-size:15.49px;letter-spacing:-0.496px;color:#000;">0A</div>
</div>
<div style="left:99.80px;top:189.55px;width:71.70px;height:24px;overflow:hidden;">
<div class="m" style="left:0.00px;top:2.98px;height:20px;line-height:20px;font-size:15.49px;letter-spacing:-0.496px;color:#000;">539</div>
</div>
<div style="left:181.20px;top:189.55px;width:131.80px;height:24px;overflow:hidden;">
<div class="m" style="left:0.00px;top:2.98px;height:20px;line-height:20px;font-size:15.49px;letter-spacing:-0.496px;color:#000;">4.098096712s</div>
</div>
<div style="left:509.70px;top:189.55px;width:178.00px;height:24px;overflow:hidden;">
<div class="m" style="left:0.00px;top:2.98px;height:20px;line-height:20px;font-size:15.49px;letter-spacing:-0.496px;color:#000;">EOB</div>
</div>
<div style="left:99.80px;top:216.65px;width:71.70px;height:24px;overflow:hidden;">
<div class="m" style="left:0.00px;top:2.98px;height:20px;line-height:20px;font-size:15.49px;letter-spacing:-0.496px;color:#000;">540</div>
</div>
<div style="left:181.20px;top:216.65px;width:131.80px;height:24px;overflow:hidden;">
<div class="m" style="left:0.00px;top:2.98px;height:20px;line-height:20px;font-size:15.49px;letter-spacing:-0.496px;color:#000;">4.098431440s</div>
</div>
<div style="left:322.80px;top:216.65px;width:177.20px;height:24px;overflow:hidden;">
<div class="m" style="left:0.00px;top:2.98px;height:20px;line-height:20px;font-size:15.49px;letter-spacing:-0.496px;color:#000;">SOB</div>
</div>
<div style="left:99.80px;top:243.75px;width:71.70px;height:24px;overflow:hidden;">
<div class="m" style="left:0.00px;top:2.98px;height:20px;line-height:20px;font-size:15.49px;letter-spacing:-0.496px;color:#000;">541</div>
</div>
<div style="left:181.20px;top:243.75px;width:131.80px;height:24px;overflow:hidden;">
<div class="m" style="left:0.00px;top:2.98px;height:20px;line-height:20px;font-size:15.49px;letter-spacing:-0.496px;color:#000;">4.098448248s</div>
</div>
<div style="left:322.80px;top:243.75px;width:177.20px;height:24px;overflow:hidden;">
<div class="m" style="left:0.00px;top:2.98px;height:20px;line-height:20px;font-size:15.49px;letter-spacing:-0.496px;color:#000;">DL_DATA</div>
</div>
<div style="left:698.60px;top:243.75px;width:76.20px;height:24px;overflow:hidden;">
<div class="m" style="left:0.00px;top:2.98px;height:20px;line-height:20px;font-size:15.49px;letter-spacing:-0.496px;color:#000;">0B</div>
</div>
<div style="left:99.80px;top:270.85px;width:71.70px;height:24px;overflow:hidden;">
<div class="m" style="left:0.00px;top:2.98px;height:20px;line-height:20px;font-size:15.49px;letter-spacing:-0.496px;color:#000;">542</div>
</div>
<div style="left:181.20px;top:270.85px;width:131.80px;height:24px;overflow:hidden;">
<div class="m" style="left:0.00px;top:2.98px;height:20px;line-height:20px;font-size:15.49px;letter-spacing:-0.496px;color:#000;">4.098494016s</div>
</div>
<div style="left:322.80px;top:270.85px;width:177.20px;height:24px;overflow:hidden;">
<div class="m" style="left:0.00px;top:2.98px;height:20px;line-height:20px;font-size:15.49px;letter-spacing:-0.496px;color:#000;">EOB</div>
</div>
<div style="left:99.80px;top:297.95px;width:71.70px;height:24px;overflow:hidden;">
<div class="m" style="left:0.00px;top:2.98px;height:20px;line-height:20px;font-size:15.49px;letter-spacing:-0.496px;color:#000;">543</div>
</div>
<div style="left:181.20px;top:297.95px;width:131.80px;height:24px;overflow:hidden;">
<div class="m" style="left:0.00px;top:2.98px;height:20px;line-height:20px;font-size:15.49px;letter-spacing:-0.496px;color:#000;">4.099079088s</div>
</div>
<div style="left:322.80px;top:297.95px;width:177.20px;height:24px;overflow:hidden;">
<div class="m" style="left:0.00px;top:2.98px;height:20px;line-height:20px;font-size:15.49px;letter-spacing:-0.496px;color:#000;">SOB</div>
</div>
<div style="left:99.80px;top:325.05px;width:71.70px;height:24px;overflow:hidden;">
<div class="m" style="left:0.00px;top:2.98px;height:20px;line-height:20px;font-size:15.49px;letter-spacing:-0.496px;color:#000;">544</div>
</div>
<div style="left:181.20px;top:325.05px;width:131.80px;height:24px;overflow:hidden;">
<div class="m" style="left:0.00px;top:2.98px;height:20px;line-height:20px;font-size:15.49px;letter-spacing:-0.496px;color:#000;">4.099095904s</div>
</div>
<div style="left:322.80px;top:325.05px;width:177.20px;height:24px;overflow:hidden;">
<div class="m" style="left:0.00px;top:2.98px;height:20px;line-height:20px;font-size:15.49px;letter-spacing:-0.496px;color:#000;">DL_DATA</div>
</div>
<div style="left:698.60px;top:325.05px;width:76.20px;height:24px;overflow:hidden;">
<div class="m" style="left:0.00px;top:2.98px;height:20px;line-height:20px;font-size:15.49px;letter-spacing:-0.496px;color:#000;">0C</div>
</div>
<div style="left:99.80px;top:352.15px;width:71.70px;height:24px;overflow:hidden;">
<div class="m" style="left:0.00px;top:2.98px;height:20px;line-height:20px;font-size:15.49px;letter-spacing:-0.496px;color:#000;">545</div>
</div>
<div style="left:181.20px;top:352.15px;width:131.80px;height:24px;overflow:hidden;">
<div class="m" style="left:0.00px;top:2.98px;height:20px;line-height:20px;font-size:15.49px;letter-spacing:-0.496px;color:#000;">4.099141664s</div>
</div>
<div style="left:322.80px;top:352.15px;width:177.20px;height:24px;overflow:hidden;">
<div class="m" style="left:0.00px;top:2.98px;height:20px;line-height:20px;font-size:15.49px;letter-spacing:-0.496px;color:#000;">EOB</div>
</div>
<div style="left:99.80px;top:379.25px;width:71.70px;height:24px;overflow:hidden;">
<div class="m" style="left:0.00px;top:2.98px;height:20px;line-height:20px;font-size:15.49px;letter-spacing:-0.496px;color:#000;">546</div>
</div>
<div style="left:181.20px;top:379.25px;width:131.80px;height:24px;overflow:hidden;">
<div class="m" style="left:0.00px;top:2.98px;height:20px;line-height:20px;font-size:15.49px;letter-spacing:-0.496px;color:#000;">4.099141720s</div>
</div>
<div style="left:509.70px;top:379.25px;width:178.00px;height:24px;overflow:hidden;">
<div class="m" style="left:0.00px;top:2.98px;height:20px;line-height:20px;font-size:15.49px;letter-spacing:-0.496px;color:#000;">SOB</div>
</div>
<div style="left:99.80px;top:406.35px;width:71.70px;height:24px;overflow:hidden;">
<div class="m" style="left:0.00px;top:2.98px;height:20px;line-height:20px;font-size:15.49px;letter-spacing:-0.496px;color:#000;">547</div>
</div>
<div style="left:181.20px;top:406.35px;width:131.80px;height:24px;overflow:hidden;">
<div class="m" style="left:0.00px;top:2.98px;height:20px;line-height:20px;font-size:15.49px;letter-spacing:-0.496px;color:#000;">4.099146320s</div>
</div>
<div style="left:509.70px;top:406.35px;width:178.00px;height:24px;overflow:hidden;">
<div class="m" style="left:0.00px;top:2.98px;height:20px;line-height:20px;font-size:15.49px;letter-spacing:-0.496px;color:#000;">DL_AFC</div>
</div>
<div style="left:698.60px;top:406.35px;width:76.20px;height:24px;overflow:hidden;">
<div class="m" style="left:0.00px;top:2.98px;height:20px;line-height:20px;font-size:15.49px;letter-spacing:-0.496px;color:#000;">0B</div>
</div>
</div>
<div style="left:1339.70px;top:194.10px;width:16.30px;height:440.90px;background:#f0f0f0;"></div>
<div style="left:563.30px;top:617.30px;width:776.40px;height:17.70px;background:#f0f0f0;"></div>
<div style="left:680.50px;top:618.20px;width:634.50px;height:16.60px;background:#cbd3f1;"></div>
<div style="left:658.20px;top:619.60px;width:21.30px;height:13.80px;background:#fff;border:1.7px solid #6a88fb;border-radius:3.5px;"></div>
<svg style="left:0;top:0" width="1951" height="1154"><polygon points="671.0500000000001,621.3 671.0500000000001,631.7 665.45,626.5" fill="#444"/></svg>
<div style="left:1316.60px;top:619.60px;width:21.30px;height:14.00px;background:#fff;border:1.7px solid #6a88fb;border-radius:3.5px;"></div>
<svg style="left:0;top:0" width="1951" height="1154"><polygon points="1323.95,621.4 1323.95,631.8000000000001 1329.55,626.6" fill="#444"/></svg>
<div style="left:681.30px;top:619.50px;width:625.20px;height:13.70px;background:#8099f3;border-radius:3.5px;border:1px solid #8a8fa6;"></div>
<div style="left:1339.90px;top:220.00px;width:16.00px;height:374.00px;background:#cbd3f1;"></div>
<div style="left:1341.20px;top:197.50px;width:12.70px;height:21.40px;background:#fff;border:1.7px solid #6a88fb;border-radius:3.5px;"></div>
<svg style="left:0;top:0" width="1951" height="1154"><polygon points="1343.05,211.1 1352.05,211.1 1347.55,205.79999999999998" fill="#444"/></svg>
<div style="left:1341.20px;top:595.10px;width:12.70px;height:21.40px;background:#fff;border:1.7px solid #6a88fb;border-radius:3.5px;"></div>
<svg style="left:0;top:0" width="1951" height="1154"><polygon points="1343.05,603.5000000000001 1352.05,603.5000000000001 1347.55,608.8000000000001" fill="#444"/></svg>
<div style="left:1341.40px;top:303.00px;width:13.00px;height:9.60px;background:#7d9af6;border-radius:3px;border:1px solid #90a0d8;"></div>
<div style="left:561.40px;top:682.00px;width:795.80px;height:4.30px;background:#f7a400;border-radius:4px 4px 0 0;"></div>
<div style="left:561.80px;top:685.80px;width:795.00px;height:413.20px;background:#fff;border:1.3px solid #688caf;border-bottom:none;"></div>
<div style="left:561.40px;top:1099.00px;width:795.80px;height:5.50px;background:#f7a400;border-radius:0 0 4px 4px;"></div>
<div style="left:562.00px;top:648.00px;width:80.50px;height:36.00px;background:#f7a400;border-radius:4.5px 4.5px 0 0;"></div>
<div class="m" style="left:570.30px;top:656.58px;height:20px;line-height:20px;font-size:15.49px;letter-spacing:-0.496px;color:#000;">UFSView</div>
<div style="left:644.30px;top:648.00px;width:89.50px;height:33.20px;background:#6384fd;border-radius:4.5px 5px 0 0;border-right:1px solid #e3eafd;border-bottom:1.3px solid #e3eafd;"></div>
<div class="m" style="left:652.50px;top:656.58px;height:20px;line-height:20px;font-size:15.49px;letter-spacing:-0.496px;color:#fff;">PacpView</div>
<svg style="left:1343px;top:659px" width="12" height="12" viewBox="0 0 12 12"><rect x="0" y="0" width="11" height="2.2" fill="#c9cfdb"/><path d="M0 5.2 H11 L5.5 11.2Z" fill="#c9cfdb"/></svg>
<div style="left:563.30px;top:686.50px;width:792.70px;height:32.30px;background:#f0f0f0;"></div>
<div style="left:658.00px;top:689.00px;width:78.40px;height:28.80px;background:#6384fd;overflow:hidden;"></div>
<div class="m" style="left:658.00px;top:694.68px;height:20px;line-height:20px;font-size:15.49px;letter-spacing:-0.496px;color:#fff;width:78.40px;text-align:center;">Index</div>
<div style="left:738.90px;top:689.00px;width:133.70px;height:28.80px;background:#6384fd;overflow:hidden;"></div>
<div class="m" style="left:738.90px;top:694.68px;height:20px;line-height:20px;font-size:15.49px;letter-spacing:-0.496px;color:#fff;width:133.70px;text-align:center;">Timestamp</div>
<div style="left:874.80px;top:689.00px;width:183.80px;height:28.80px;background:#6384fd;overflow:hidden;"></div>
<div class="m" style="left:874.80px;top:694.68px;height:20px;line-height:20px;font-size:15.49px;letter-spacing:-0.496px;color:#fff;width:183.80px;text-align:center;">Host</div>
<div style="left:1060.80px;top:689.00px;width:184.60px;height:28.80px;background:#6384fd;overflow:hidden;"></div>
<div class="m" style="left:1060.80px;top:694.68px;height:20px;line-height:20px;font-size:15.49px;letter-spacing:-0.496px;color:#fff;width:184.60px;text-align:center;">Device</div>
<div style="left:1247.20px;top:689.00px;width:92.40px;height:28.80px;background:#6384fd;overflow:hidden;"></div>
<div style="left:563.3px;top:718.20px;width:776.4px;height:380.80px;overflow:hidden;background:#fff;">
<div style="left:0.00px;top:0.00px;width:92.40px;height:380.80px;background:linear-gradient(90deg,#fff 0%,#fff 38%,#f6f6f8 44%,#f3f4f6 75%,#f0f0f2 100%);"></div>
<div style="left:0.00px;top:0.00px;width:93.00px;height:2.20px;background:#f0f0f0;"></div>
<div style="left:93.40px;top:136.82px;width:683.00px;height:27.13px;background:#9db2fc;"></div>
<div style="left:0.00px;top:136.22px;width:93.40px;height:28.33px;background:linear-gradient(90deg,#f3f9fd,#d9ebf8);border-top:1.3px solid #86c6ee;border-bottom:1.3px solid #86c6ee;"></div>
<div style="left:93.40px;top:163.95px;width:683.00px;height:27.13px;background:#fd787a;"></div>
<svg style="left:0;top:0" width="776.4" height="380.80" viewBox="0 0 776.4 380.80"><line x1="0" y1="28.30" x2="92.4" y2="28.30" stroke="#e1e1e1" stroke-width="1.8"/><line x1="93.4" y1="28.30" x2="776.4" y2="28.30" stroke="#6a6a6a" stroke-width="1.35"/><line x1="0" y1="55.43" x2="92.4" y2="55.43" stroke="#e1e1e1" stroke-width="1.8"/><line x1="93.4" y1="55.43" x2="776.4" y2="55.43" stroke="#6a6a6a" stroke-width="1.35"/><line x1="0" y1="82.56" x2="92.4" y2="82.56" stroke="#e1e1e1" stroke-width="1.8"/><line x1="93.4" y1="82.56" x2="776.4" y2="82.56" stroke="#6a6a6a" stroke-width="1.35"/><line x1="0" y1="109.69" x2="92.4" y2="109.69" stroke="#e1e1e1" stroke-width="1.8"/><line x1="93.4" y1="109.69" x2="776.4" y2="109.69" stroke="#6a6a6a" stroke-width="1.35"/><line x1="93.4" y1="136.82" x2="776.4" y2="136.82" stroke="#6a6a6a" stroke-width="1.35"/><line x1="93.4" y1="163.95" x2="776.4" y2="163.95" stroke="#6a6a6a" stroke-width="1.35"/><line x1="0" y1="191.08" x2="92.4" y2="191.08" stroke="#e1e1e1" stroke-width="1.8"/><line x1="93.4" y1="191.08" x2="776.4" y2="191.08" stroke="#6a6a6a" stroke-width="1.35"/><line x1="0" y1="218.21" x2="92.4" y2="218.21" stroke="#e1e1e1" stroke-width="1.8"/><line x1="93.4" y1="218.21" x2="776.4" y2="218.21" stroke="#6a6a6a" stroke-width="1.35"/><line x1="0" y1="245.34" x2="92.4" y2="245.34" stroke="#e1e1e1" stroke-width="1.8"/><line x1="93.4" y1="245.34" x2="776.4" y2="245.34" stroke="#6a6a6a" stroke-width="1.35"/><line x1="0" y1="272.47" x2="92.4" y2="272.47" stroke="#e1e1e1" stroke-width="1.8"/><line x1="93.4" y1="272.47" x2="776.4" y2="272.47" stroke="#6a6a6a" stroke-width="1.35"/><line x1="0" y1="299.60" x2="92.4" y2="299.60" stroke="#e1e1e1" stroke-width="1.8"/><line x1="93.4" y1="299.60" x2="776.4" y2="299.60" stroke="#6a6a6a" stroke-width="1.35"/><line x1="0" y1="326.73" x2="92.4" y2="326.73" stroke="#e1e1e1" stroke-width="1.8"/><line x1="93.4" y1="326.73" x2="776.4" y2="326.73" stroke="#6a6a6a" stroke-width="1.35"/><line x1="0" y1="353.86" x2="92.4" y2="353.86" stroke="#e1e1e1" stroke-width="1.8"/><line x1="93.4" y1="353.86" x2="776.4" y2="353.86" stroke="#6a6a6a" stroke-width="1.35"/><line x1="0" y1="380.99" x2="92.4" y2="380.99" stroke="#e1e1e1" stroke-width="1.8"/><line x1="93.4" y1="380.99" x2="776.4" y2="380.99" stroke="#6a6a6a" stroke-width="1.35"/><line x1="173.85" y1="1.5" x2="173.85" y2="380.80" stroke="#6a6a6a" stroke-width="1.35"/><line x1="309.75" y1="1.5" x2="309.75" y2="380.80" stroke="#6a6a6a" stroke-width="1.35"/><line x1="495.75" y1="1.5" x2="495.75" y2="380.80" stroke="#6a6a6a" stroke-width="1.35"/><line x1="682.15" y1="1.5" x2="682.15" y2="380.80" stroke="#6a6a6a" stroke-width="1.35"/><line x1="92.10000000000001" y1="0" x2="92.10000000000001" y2="380.80" stroke="#d8d8da" stroke-width="1"/></svg>
<div style="left:99.50px;top:-0.08px;width:72.10px;height:24px;overflow:hidden;">
<div class="m" style="left:0.00px;top:2.98px;height:20px;line-height:20px;font-size:15.49px;letter-spacing:-0.496px;color:#000;">0</div>
</div>
<div style="left:180.90px;top:-0.08px;width:126.90px;height:24px;overflow:hidden;">
<div class="m" style="left:0.00px;top:2.98px;height:20px;line-height:20px;font-size:15.49px;letter-spacing:-0.496px;color:#000;">0s</div>
</div>
<div style="left:315.80px;top:-0.08px;width:178.00px;height:24px;overflow:hidden;">
<div class="m" style="left:0.00px;top:2.98px;height:20px;line-height:20px;font-size:15.49px;letter-spacing:-0.496px;color:#000;">CTS_START Test_3_2_3</div>
</div>
<div style="left:99.50px;top:27.05px;width:72.10px;height:24px;overflow:hidden;">
<div class="m" style="left:0.00px;top:2.98px;height:20px;line-height:20px;font-size:15.49px;letter-spacing:-0.496px;color:#000;">1</div>
</div>
<div style="left:180.90px;top:27.05px;width:126.90px;height:24px;overflow:hidden;">
<div class="m" style="left:0.00px;top:2.98px;height:20px;line-height:20px;font-size:15.49px;letter-spacing:-0.496px;color:#000;">0s</div>
</div>
<div style="left:502.60px;top:27.05px;width:178.00px;height:24px;overflow:hidden;">
<div class="m" style="left:0.00px;top:2.98px;height:20px;line-height:20px;font-size:15.49px;letter-spacing:-0.496px;color:#000;">CTS_START Test_3_2_3</div>
</div>
<div style="left:99.50px;top:54.18px;width:72.10px;height:24px;overflow:hidden;">
<div class="m" style="left:0.00px;top:2.98px;height:20px;line-height:20px;font-size:15.49px;letter-spacing:-0.496px;color:#000;">2</div>
</div>
<div style="left:180.90px;top:54.18px;width:126.90px;height:24px;overflow:hidden;">
<div class="m" style="left:0.00px;top:2.98px;height:20px;line-height:20px;font-size:15.49px;letter-spacing:-0.496px;color:#000;">2.323695624s</div>
</div>
<div style="left:315.80px;top:54.18px;width:178.00px;height:24px;overflow:hidden;">
<div class="m" style="left:0.00px;top:2.98px;height:20px;line-height:20px;font-size:15.49px;letter-spacing:-0.496px;color:#000;">NOP_OUT</div>
</div>
<div style="left:99.50px;top:81.31px;width:72.10px;height:24px;overflow:hidden;">
<div class="m" style="left:0.00px;top:2.98px;height:20px;line-height:20px;font-size:15.49px;letter-spacing:-0.496px;color:#000;">3</div>
</div>
<div style="left:180.90px;top:81.31px;width:126.90px;height:24px;overflow:hidden;">
<div class="m" style="left:0.00px;top:2.98px;height:20px;line-height:20px;font-size:15.49px;letter-spacing:-0.496px;color:#000;">2.324967848s</div>
</div>
<div style="left:315.80px;top:81.31px;width:178.00px;height:24px;overflow:hidden;">
<div class="m" style="left:0.00px;top:2.98px;height:20px;line-height:20px;font-size:15.49px;letter-spacing:-0.496px;color:#000;">DATA_OUT</div>
</div>
<div style="left:99.50px;top:108.44px;width:72.10px;height:24px;overflow:hidden;">
<div class="m" style="left:0.00px;top:2.98px;height:20px;line-height:20px;font-size:15.49px;letter-spacing:-0.496px;color:#000;">4</div>
</div>
<div style="left:180.90px;top:108.44px;width:126.90px;height:24px;overflow:hidden;">
<div class="m" style="left:0.00px;top:2.98px;height:20px;line-height:20px;font-size:15.49px;letter-spacing:-0.496px;color:#000;">2.546969136s</div>
</div>
<div style="left:315.80px;top:108.44px;width:178.00px;height:24px;overflow:hidden;">
<div class="m" style="left:0.00px;top:2.98px;height:20px;line-height:20px;font-size:15.49px;letter-spacing:-0.496px;color:#000;">TASK_MGMT_REQUEST</div>
</div>
<div style="left:99.50px;top:135.57px;width:72.10px;height:24px;overflow:hidden;">
<div class="m" style="left:0.00px;top:2.98px;height:20px;line-height:20px;font-size:15.49px;letter-spacing:-0.496px;color:#fff;">5</div>
</div>
<div style="left:180.90px;top:135.57px;width:126.90px;height:24px;overflow:hidden;">
<div class="m" style="left:0.00px;top:2.98px;height:20px;line-height:20px;font-size:15.49px;letter-spacing:-0.496px;color:#fff;">4.097800616s</div>
</div>
<div style="left:315.80px;top:135.57px;width:178.00px;height:24px;overflow:hidden;">
<div class="m" style="left:0.00px;top:2.98px;height:20px;line-height:20px;font-size:15.49px;letter-spacing:-0.496px;color:#fff;">NOP_OUT</div>
</div>
<div style="left:99.50px;top:162.70px;width:72.10px;height:24px;overflow:hidden;">
<div class="m" style="left:0.00px;top:2.98px;height:20px;line-height:20px;font-size:15.49px;letter-spacing:-0.496px;color:#000;">6</div>
</div>
<div style="left:180.90px;top:162.70px;width:126.90px;height:24px;overflow:hidden;">
<div class="m" style="left:0.00px;top:2.98px;height:20px;line-height:20px;font-size:15.49px;letter-spacing:-0.496px;color:#000;">4.314610176s</div>
</div>
<div style="left:315.80px;top:162.70px;width:178.00px;height:24px;overflow:hidden;">
<div class="m" style="left:0.00px;top:2.98px;height:20px;line-height:20px;font-size:15.49px;letter-spacing:-0.496px;color:#000;">COMMAND</div>
</div>
<div style="left:99.50px;top:189.83px;width:72.10px;height:24px;overflow:hidden;">
<div class="m" style="left:0.00px;top:2.98px;height:20px;line-height:20px;font-size:15.49px;letter-spacing:-0.496px;color:#000;">7</div>
</div>
<div style="left:180.90px;top:189.83px;width:126.90px;height:24px;overflow:hidden;">
<div class="m" style="left:0.00px;top:2.98px;height:20px;line-height:20px;font-size:15.49px;letter-spacing:-0.496px;color:#000;">5.880223072s</div>
</div>
<div style="left:315.80px;top:189.83px;width:178.00px;height:24px;overflow:hidden;">
<div class="m" style="left:0.00px;top:2.98px;height:20px;line-height:20px;font-size:15.49px;letter-spacing:-0.496px;color:#000;">NOP_OUT</div>
</div>
<div style="left:99.50px;top:216.96px;width:72.10px;height:24px;overflow:hidden;">
<div class="m" style="left:0.00px;top:2.98px;height:20px;line-height:20px;font-size:15.49px;letter-spacing:-0.496px;color:#000;">8</div>
</div>
<div style="left:180.90px;top:216.96px;width:126.90px;height:24px;overflow:hidden;">
<div class="m" style="left:0.00px;top:2.98px;height:20px;line-height:20px;font-size:15.49px;letter-spacing:-0.496px;color:#000;">7.421032456s</div>
</div>
<div style="left:315.80px;top:216.96px;width:178.00px;height:24px;overflow:hidden;">
<div class="m" style="left:0.00px;top:2.98px;height:20px;line-height:20px;font-size:15.49px;letter-spacing:-0.496px;color:#000;">NOP_OUT</div>
</div>
<div style="left:99.50px;top:244.09px;width:72.10px;height:24px;overflow:hidden;">
<div class="m" style="left:0.00px;top:2.98px;height:20px;line-height:20px;font-size:15.49px;letter-spacing:-0.496px;color:#000;">9</div>
</div>
<div style="left:180.90px;top:244.09px;width:126.90px;height:24px;overflow:hidden;">
<div class="m" style="left:0.00px;top:2.98px;height:20px;line-height:20px;font-size:15.49px;letter-spacing:-0.496px;color:#000;">7.424789880s</div>
</div>
<div style="left:315.80px;top:244.09px;width:178.00px;height:24px;overflow:hidden;">
<div class="m" style="left:0.00px;top:2.98px;height:20px;line-height:20px;font-size:15.49px;letter-spacing:-0.496px;color:#000;">TASK_MGMT_RESPONSE</div>
</div>
<div style="left:99.50px;top:271.22px;width:72.10px;height:24px;overflow:hidden;">
<div class="m" style="left:0.00px;top:2.98px;height:20px;line-height:20px;font-size:15.49px;letter-spacing:-0.496px;color:#000;">10</div>
</div>
<div style="left:180.90px;top:271.22px;width:126.90px;height:24px;overflow:hidden;">
<div class="m" style="left:0.00px;top:2.98px;height:20px;line-height:20px;font-size:15.49px;letter-spacing:-0.496px;color:#000;">7.427044328s</div>
</div>
<div style="left:315.80px;top:271.22px;width:178.00px;height:24px;overflow:hidden;">
<div class="m" style="left:0.00px;top:2.98px;height:20px;line-height:20px;font-size:15.49px;letter-spacing:-0.496px;color:#000;">NOP_IN</div>
</div>
<div style="left:99.50px;top:298.35px;width:72.10px;height:24px;overflow:hidden;">
<div class="m" style="left:0.00px;top:2.98px;height:20px;line-height:20px;font-size:15.49px;letter-spacing:-0.496px;color:#000;">11</div>
</div>
<div style="left:180.90px;top:298.35px;width:126.90px;height:24px;overflow:hidden;">
<div class="m" style="left:0.00px;top:2.98px;height:20px;line-height:20px;font-size:15.49px;letter-spacing:-0.496px;color:#000;">8.091083080s</div>
</div>
<div style="left:315.80px;top:298.35px;width:178.00px;height:24px;overflow:hidden;">
<div class="m" style="left:0.00px;top:2.98px;height:20px;line-height:20px;font-size:15.49px;letter-spacing:-0.496px;color:#000;">NOP_OUT</div>
</div>
<div style="left:99.50px;top:325.48px;width:72.10px;height:24px;overflow:hidden;">
<div class="m" style="left:0.00px;top:2.98px;height:20px;line-height:20px;font-size:15.49px;letter-spacing:-0.496px;color:#000;">12</div>
</div>
<div style="left:180.90px;top:325.48px;width:126.90px;height:24px;overflow:hidden;">
<div class="m" style="left:0.00px;top:2.98px;height:20px;line-height:20px;font-size:15.49px;letter-spacing:-0.496px;color:#000;">8.091892256s</div>
</div>
<div style="left:315.80px;top:325.48px;width:178.00px;height:24px;overflow:hidden;">
<div class="m" style="left:0.00px;top:2.98px;height:20px;line-height:20px;font-size:15.49px;letter-spacing:-0.496px;color:#000;">NOP_OUT</div>
</div>
<div style="left:99.50px;top:352.61px;width:72.10px;height:24px;overflow:hidden;">
<div class="m" style="left:0.00px;top:2.98px;height:20px;line-height:20px;font-size:15.49px;letter-spacing:-0.496px;color:#000;">13</div>
</div>
<div style="left:180.90px;top:352.61px;width:126.90px;height:24px;overflow:hidden;">
<div class="m" style="left:0.00px;top:2.98px;height:20px;line-height:20px;font-size:15.49px;letter-spacing:-0.496px;color:#000;">8.092701432s</div>
</div>
<div style="left:315.80px;top:352.61px;width:178.00px;height:24px;overflow:hidden;">
<div class="m" style="left:0.00px;top:2.98px;height:20px;line-height:20px;font-size:15.49px;letter-spacing:-0.496px;color:#000;">NOP_OUT</div>
</div>
</div>
<div style="left:1339.70px;top:718.20px;width:16.30px;height:380.80px;background:#f0f0f0;"></div>
<div style="left:1339.90px;top:743.00px;width:16.00px;height:333.00px;background:#cbd3f1;"></div>
<div style="left:1341.20px;top:721.60px;width:12.70px;height:20.60px;background:#fff;border:1.7px solid #6a88fb;border-radius:3.5px;"></div>
<svg style="left:0;top:0" width="1951" height="1154"><polygon points="1343.05,734.8 1352.05,734.8 1347.55,729.5" fill="#444"/></svg>
<div style="left:1341.20px;top:1076.80px;width:12.70px;height:20.60px;background:#fff;border:1.7px solid #6a88fb;border-radius:3.5px;"></div>
<svg style="left:0;top:0" width="1951" height="1154"><polygon points="1343.05,1084.8 1352.05,1084.8 1347.55,1090.1" fill="#444"/></svg>
<div style="left:1341.40px;top:744.60px;width:13.00px;height:48.40px;background:#7d9af6;border-radius:3px;border:1px solid #90a0d8;"></div>
<div style="left:1364.80px;top:158.00px;width:579.20px;height:4.30px;background:#6384fd;border-radius:4px 4px 0 0;"></div>
<div style="left:1365.20px;top:161.80px;width:578.40px;height:443.80px;background:#fff;border:1px solid #a8a8a8;border-bottom:none;"></div>
<div style="left:1364.80px;top:605.60px;width:579.20px;height:5.50px;background:#6384fd;border-radius:0 0 4px 4px;"></div>
<div style="left:1365.00px;top:124.00px;width:161.40px;height:36.00px;background:#6384fd;border-radius:4.5px 4.5px 0 0;"></div>
<div class="m" style="left:1374.00px;top:132.58px;height:20px;line-height:20px;font-size:15.49px;letter-spacing:-0.496px;color:#fff;">UniPro-FrameView</div>
<div style="left:1528.20px;top:124.00px;width:161.80px;height:33.20px;background:#6384fd;border-radius:4.5px 5px 0 0;border-right:1px solid #e3eafd;border-bottom:1.3px solid #e3eafd;"></div>
<div class="m" style="left:1537.50px;top:132.58px;height:20px;line-height:20px;font-size:15.49px;letter-spacing:-0.496px;color:#fff;">SymbolsView_HOST</div>
<svg style="left:1929.9px;top:134.7px" width="12" height="12" viewBox="0 0 12 12"><rect x="0" y="0" width="11" height="2.2" fill="#c9cfdb"/><path d="M0 5.2 H11 L5.5 11.2Z" fill="#c9cfdb"/></svg>
<div style="left:1374.00px;top:168.20px;width:28.90px;height:26.50px;background:#fff;border:1.1px solid #111;"></div>
<div class="m" style="left:1354.00px;top:172.03px;width:68.90px;height:24px;line-height:24px;font-size:18.59px;letter-spacing:-0.595px;color:#000;text-align:center;transform:scaleX(1.12);">16</div>
<div style="left:1407.27px;top:168.20px;width:28.90px;height:26.50px;background:#fff;border:1.1px solid #111;"></div>
<div class="m" style="left:1387.27px;top:172.03px;width:68.90px;height:24px;line-height:24px;font-size:18.59px;letter-spacing:-0.595px;color:#000;text-align:center;transform:scaleX(1.12);">15</div>
<div style="left:1440.54px;top:168.20px;width:28.90px;height:26.50px;background:#fff;border:1.1px solid #111;"></div>
<div class="m" style="left:1420.54px;top:172.03px;width:68.90px;height:24px;line-height:24px;font-size:18.59px;letter-spacing:-0.595px;color:#000;text-align:center;transform:scaleX(1.12);">14</div>
<div style="left:1473.81px;top:168.20px;width:28.90px;height:26.50px;background:#fff;border:1.1px solid #111;"></div>
<div class="m" style="left:1453.81px;top:172.03px;width:68.90px;height:24px;line-height:24px;font-size:18.59px;letter-spacing:-0.595px;color:#000;text-align:center;transform:scaleX(1.12);">13</div>
<div style="left:1507.08px;top:168.20px;width:28.90px;height:26.50px;background:#fff;border:1.1px solid #111;"></div>
<div class="m" style="left:1487.08px;top:172.03px;width:68.90px;height:24px;line-height:24px;font-size:18.59px;letter-spacing:-0.595px;color:#000;text-align:center;transform:scaleX(1.12);">12</div>
<div style="left:1540.35px;top:168.20px;width:28.90px;height:26.50px;background:#fff;border:1.1px solid #111;"></div>
<div class="m" style="left:1520.35px;top:172.03px;width:68.90px;height:24px;line-height:24px;font-size:18.59px;letter-spacing:-0.595px;color:#000;text-align:center;transform:scaleX(1.12);">11</div>
<div style="left:1573.62px;top:168.20px;width:28.90px;height:26.50px;background:#fff;border:1.1px solid #111;"></div>
<div class="m" style="left:1553.62px;top:172.03px;width:68.90px;height:24px;line-height:24px;font-size:18.59px;letter-spacing:-0.595px;color:#000;text-align:center;transform:scaleX(1.12);">10</div>
<div style="left:1606.89px;top:168.20px;width:28.90px;height:26.50px;background:#fff;border:1.1px solid #111;"></div>
<div class="m" style="left:1586.89px;top:172.03px;width:68.90px;height:24px;line-height:24px;font-size:18.59px;letter-spacing:-0.595px;color:#000;text-align:center;transform:scaleX(1.12);">9</div>
<div style="left:1640.16px;top:168.20px;width:28.90px;height:26.50px;background:#fff;border:1.1px solid #111;"></div>
<div class="m" style="left:1620.16px;top:172.03px;width:68.90px;height:24px;line-height:24px;font-size:18.59px;letter-spacing:-0.595px;color:#000;text-align:center;transform:scaleX(1.12);">8</div>
<div style="left:1673.43px;top:168.20px;width:28.90px;height:26.50px;background:#fff;border:1.1px solid #111;"></div>
<div class="m" style="left:1653.43px;top:172.03px;width:68.90px;height:24px;line-height:24px;font-size:18.59px;letter-spacing:-0.595px;color:#000;text-align:center;transform:scaleX(1.12);">7</div>
<div style="left:1706.70px;top:168.20px;width:28.90px;height:26.50px;background:#fff;border:1.1px solid #111;"></div>
<div class="m" style="left:1686.70px;top:172.03px;width:68.90px;height:24px;line-height:24px;font-size:18.59px;letter-spacing:-0.595px;color:#000;text-align:center;transform:scaleX(1.12);">6</div>
<div style="left:1739.97px;top:168.20px;width:28.90px;height:26.50px;background:#fff;border:1.1px solid #111;"></div>
<div class="m" style="left:1719.97px;top:172.03px;width:68.90px;height:24px;line-height:24px;font-size:18.59px;letter-spacing:-0.595px;color:#000;text-align:center;transform:scaleX(1.12);">5</div>
<div style="left:1773.24px;top:168.20px;width:28.90px;height:26.50px;background:#fff;border:1.1px solid #111;"></div>
<div class="m" style="left:1753.24px;top:172.03px;width:68.90px;height:24px;line-height:24px;font-size:18.59px;letter-spacing:-0.595px;color:#000;text-align:center;transform:scaleX(1.12);">4</div>
<div style="left:1806.51px;top:168.20px;width:28.90px;height:26.50px;background:#fff;border:1.1px solid #111;"></div>
<div class="m" style="left:1786.51px;top:172.03px;width:68.90px;height:24px;line-height:24px;font-size:18.59px;letter-spacing:-0.595px;color:#000;text-align:center;transform:scaleX(1.12);">3</div>
<div style="left:1839.78px;top:168.20px;width:28.90px;height:26.50px;background:#fff;border:1.1px solid #111;"></div>
<div class="m" style="left:1819.78px;top:172.03px;width:68.90px;height:24px;line-height:24px;font-size:18.59px;letter-spacing:-0.595px;color:#000;text-align:center;transform:scaleX(1.12);">2</div>
<div style="left:1873.05px;top:168.20px;width:28.90px;height:26.50px;background:#fff;border:1.1px solid #111;"></div>
<div class="m" style="left:1853.05px;top:172.03px;width:68.90px;height:24px;line-height:24px;font-size:18.59px;letter-spacing:-0.595px;color:#000;text-align:center;transform:scaleX(1.12);">1</div>
<div style="left:1906.32px;top:168.20px;width:28.90px;height:26.50px;background:#fff;border:1.1px solid #111;"></div>
<div class="m" style="left:1886.32px;top:172.03px;width:68.90px;height:24px;line-height:24px;font-size:18.59px;letter-spacing:-0.595px;color:#000;text-align:center;transform:scaleX(1.12);">0</div>
<div style="left:1369.20px;top:200.30px;width:29.10px;height:37.30px;background:#ff0000;border:1.2px solid #7a1010;"></div>
<div class="m" style="left:1369.20px;top:207.70px;height:26px;line-height:26px;font-size:21.30px;letter-spacing:-0.682px;color:#4a1010;width:29.10px;text-align:center;">1</div>
<div style="left:1369.20px;top:240.88px;width:29.10px;height:37.30px;background:#ff0000;border:1.2px solid #7a1010;"></div>
<div class="m" style="left:1369.20px;top:248.28px;height:26px;line-height:26px;font-size:21.30px;letter-spacing:-0.682px;color:#4a1010;width:29.10px;text-align:center;">0</div>
<div style="left:1369.20px;top:281.46px;width:29.10px;height:37.30px;background:#ff0000;border:1.2px solid #7a1010;"></div>
<div class="m" style="left:1369.20px;top:288.86px;height:26px;line-height:26px;font-size:21.30px;letter-spacing:-0.682px;color:#4a1010;width:29.10px;text-align:center;">0</div>
<div style="left:1369.20px;top:322.04px;width:29.10px;height:37.30px;background:#ff0000;border:1.2px solid #7a1010;"></div>
<div class="m" style="left:1369.20px;top:329.44px;height:26px;line-height:26px;font-size:21.30px;letter-spacing:-0.682px;color:#4a1010;width:29.10px;text-align:center;">0</div>
<div style="left:1369.20px;top:362.62px;width:29.10px;height:37.30px;background:#ff0000;border:1.2px solid #7a1010;"></div>
<div class="m" style="left:1369.20px;top:370.02px;height:26px;line-height:26px;font-size:21.30px;letter-spacing:-0.682px;color:#4a1010;width:29.10px;text-align:center;">0</div>
<div style="left:1369.20px;top:403.20px;width:29.10px;height:37.30px;background:#ff0000;border:1.2px solid #7a1010;"></div>
<div class="m" style="left:1369.20px;top:410.60px;height:26px;line-height:26px;font-size:21.30px;letter-spacing:-0.682px;color:#4a1010;width:29.10px;text-align:center;">0</div>
<div style="left:1369.20px;top:443.78px;width:29.10px;height:37.30px;background:#ff0000;border:1.2px solid #7a1010;"></div>
<div class="m" style="left:1369.20px;top:451.18px;height:26px;line-height:26px;font-size:21.30px;letter-spacing:-0.682px;color:#4a1010;width:29.10px;text-align:center;">0</div>
<div style="left:1369.20px;top:484.36px;width:29.10px;height:37.30px;background:#ff0000;border:1.2px solid #7a1010;"></div>
<div class="m" style="left:1369.20px;top:491.76px;height:26px;line-height:26px;font-size:21.30px;letter-spacing:-0.682px;color:#4a1010;width:29.10px;text-align:center;">0</div>
<div style="left:1369.20px;top:524.94px;width:29.10px;height:37.30px;background:#ff0000;border:1.2px solid #7a1010;"></div>
<div class="m" style="left:1369.20px;top:532.34px;height:26px;line-height:26px;font-size:21.30px;letter-spacing:-0.682px;color:#4a1010;width:29.10px;text-align:center;">0</div>
<div style="left:1369.20px;top:565.52px;width:29.10px;height:37.30px;background:#ff0000;border:1.2px solid #7a1010;"></div>
<div class="m" style="left:1369.20px;top:572.92px;height:26px;line-height:26px;font-size:21.30px;letter-spacing:-0.682px;color:#4a1010;width:29.10px;text-align:center;">0</div>
<div style="left:1401.60px;top:200.30px;width:255.20px;height:37.30px;background:#ffa500;border:1.2px solid #6b4a10;"></div>
<div class="m" style="left:1401.60px;top:207.66px;height:26px;line-height:26px;font-size:20.62px;letter-spacing:-0.660px;color:#222;width:255.20px;text-align:center;">ESC_DL 0x1</div>
<div style="left:1660.40px;top:200.30px;width:93.30px;height:37.30px;background:#ffa500;border:1.2px solid #6b4a10;"></div>
<div class="m" style="left:1660.40px;top:207.65px;height:26px;line-height:26px;font-size:20.52px;letter-spacing:-0.657px;color:#222;width:93.30px;text-align:center;">SOF 0x0</div>
<div style="left:1757.20px;top:200.30px;width:60.90px;height:37.30px;background:#ffa500;border:1.2px solid #6b4a10;"></div>
<div class="m" style="left:1757.20px;top:211.30px;height:18px;line-height:18px;font-size:15.00px;letter-spacing:-0.480px;color:#222;width:60.90px;text-align:center;">TC 0x0</div>
<div style="left:1821.40px;top:200.30px;width:93.30px;height:37.30px;background:#ffa500;border:1.2px solid #6b4a10;"></div>
<div class="m" style="left:1821.40px;top:212.14px;height:16px;line-height:16px;font-size:12.49px;letter-spacing:-0.400px;color:#333;width:93.30px;text-align:center;">Reserved 0x7</div>
<div style="left:1401.60px;top:240.88px;width:28.90px;height:37.30px;background:#ffff00;border:1.2px solid #66661a;"></div>
<div class="m" style="left:1401.60px;top:256.32px;height:8px;line-height:8px;font-size:6.20px;letter-spacing:-0.198px;color:#665;width:28.90px;text-align:center;">L3s 0x1</div>
<div style="left:1433.50px;top:240.88px;width:223.30px;height:37.30px;background:#ffff00;border:1.2px solid #66661a;"></div>
<div class="m" style="left:1433.50px;top:250.05px;height:22px;line-height:22px;font-size:17.62px;letter-spacing:-0.564px;color:#222;width:223.30px;text-align:center;">DestDeviceID_Enc  0x1</div>
<div style="left:1660.40px;top:240.88px;width:28.20px;height:37.30px;background:#9acd32;border:1.2px solid #4a6418;"></div>
<div class="m" style="left:1660.40px;top:256.32px;height:8px;line-height:8px;font-size:6.20px;letter-spacing:-0.198px;color:#453;width:28.20px;text-align:center;">L4s 0x1</div>
<div style="left:1691.30px;top:240.88px;width:159.10px;height:37.30px;background:#9acd32;border:1.2px solid #4a6418;"></div>
<div class="m" style="left:1691.30px;top:252.73px;height:16px;line-height:16px;font-size:12.58px;letter-spacing:-0.403px;color:#222;width:159.10px;text-align:center;">DestCPortID_Enc  0x0</div>
<div style="left:1853.60px;top:240.88px;width:29.00px;height:37.30px;background:#9acd32;border:1.2px solid #4a6418;"></div>
<div class="m" style="left:1853.60px;top:256.34px;height:8px;line-height:8px;font-size:6.39px;letter-spacing:-0.205px;color:#453;width:29.00px;text-align:center;">FCT 0x0</div>
<div style="left:1886.30px;top:240.88px;width:28.40px;height:37.30px;background:#9acd32;border:1.2px solid #4a6418;"></div>
<div class="m" style="left:1886.30px;top:256.34px;height:8px;line-height:8px;font-size:6.39px;letter-spacing:-0.205px;color:#453;width:28.40px;text-align:center;">EOM 0x1</div>
<div style="left:1401.60px;top:281.46px;width:255.20px;height:37.30px;background:#fff;border:1.2px solid #222;"></div>
<div class="m" style="left:1401.60px;top:288.84px;height:26px;line-height:26px;font-size:21.01px;letter-spacing:-0.673px;color:#222;width:255.20px;text-align:center;">DL_SDU - Byte0 0x38</div>
<div style="left:1660.40px;top:281.46px;width:254.30px;height:37.30px;background:#fff;border:1.2px solid #222;"></div>
<div class="m" style="left:1660.40px;top:288.84px;height:26px;line-height:26px;font-size:21.01px;letter-spacing:-0.673px;color:#222;width:254.30px;text-align:center;">DL_SDU - Byte1 0x39</div>
<div style="left:1401.60px;top:322.04px;width:255.20px;height:37.30px;background:#add8e6;border:1.2px solid #557079;"></div>
<div class="m" style="left:1401.60px;top:329.42px;height:26px;line-height:26px;font-size:21.01px;letter-spacing:-0.673px;color:#222;width:255.20px;text-align:center;">DL_SDU - Byte2 0x3A</div>
<div style="left:1660.40px;top:322.04px;width:254.30px;height:37.30px;background:#add8e6;border:1.2px solid #557079;"></div>
<div class="m" style="left:1660.40px;top:329.42px;height:26px;line-height:26px;font-size:21.01px;letter-spacing:-0.673px;color:#222;width:254.30px;text-align:center;">DL_SDU - Byte3 0x3B</div>
<div style="left:1401.60px;top:362.62px;width:255.20px;height:37.30px;background:#fff;border:1.2px solid #222;"></div>
<div class="m" style="left:1401.60px;top:370.00px;height:26px;line-height:26px;font-size:21.01px;letter-spacing:-0.673px;color:#222;width:255.20px;text-align:center;">DL_SDU - Byte4 0x3C</div>
<div style="left:1660.40px;top:362.62px;width:254.30px;height:37.30px;background:#fff;border:1.2px solid #222;"></div>
<div class="m" style="left:1660.40px;top:370.00px;height:26px;line-height:26px;font-size:21.01px;letter-spacing:-0.673px;color:#222;width:254.30px;text-align:center;">DL_SDU - Byte5 0x3D</div>
<div style="left:1401.60px;top:403.20px;width:255.20px;height:37.30px;background:#add8e6;border:1.2px solid #557079;"></div>
<div class="m" style="left:1401.60px;top:410.58px;height:26px;line-height:26px;font-size:21.01px;letter-spacing:-0.673px;color:#222;width:255.20px;text-align:center;">DL_SDU - Byte6 0x3E</div>
<div style="left:1660.40px;top:403.20px;width:254.30px;height:37.30px;background:#add8e6;border:1.2px solid #557079;"></div>
<div class="m" style="left:1660.40px;top:410.58px;height:26px;line-height:26px;font-size:21.01px;letter-spacing:-0.673px;color:#222;width:254.30px;text-align:center;">DL_SDU - Byte7 0x3F</div>
<div style="left:1401.60px;top:443.78px;width:255.20px;height:37.30px;background:#fff;border:1.2px solid #222;"></div>
<div class="m" style="left:1401.60px;top:451.16px;height:26px;line-height:26px;font-size:21.01px;letter-spacing:-0.673px;color:#222;width:255.20px;text-align:center;">DL_SDU - Byte8 0x40</div>
<div style="left:1660.40px;top:443.78px;width:254.30px;height:37.30px;background:#fff;border:1.2px solid #222;"></div>
<div class="m" style="left:1660.40px;top:451.16px;height:26px;line-height:26px;font-size:21.01px;letter-spacing:-0.673px;color:#222;width:254.30px;text-align:center;">DL_SDU - Byte9 0x41</div>
<div style="left:1401.60px;top:484.36px;width:255.20px;height:37.30px;background:#add8e6;border:1.2px solid #557079;"></div>
<div class="m" style="left:1401.60px;top:491.74px;height:26px;line-height:26px;font-size:21.01px;letter-spacing:-0.673px;color:#222;width:255.20px;text-align:center;">DL_SDU - Byte10 0x42</div>
<div style="left:1660.40px;top:484.36px;width:254.30px;height:37.30px;background:#add8e6;border:1.2px solid #557079;"></div>
<div class="m" style="left:1660.40px;top:491.74px;height:26px;line-height:26px;font-size:21.01px;letter-spacing:-0.673px;color:#222;width:254.30px;text-align:center;">DL_SDU - Byte11 0x43</div>
<div style="left:1401.60px;top:524.94px;width:255.20px;height:37.30px;background:#fff;border:1.2px solid #222;"></div>
<div class="m" style="left:1401.60px;top:532.32px;height:26px;line-height:26px;font-size:21.01px;letter-spacing:-0.673px;color:#222;width:255.20px;text-align:center;">DL_SDU - Byte12 0x44</div>
<div style="left:1660.40px;top:524.94px;width:254.30px;height:37.30px;background:#fff;border:1.2px solid #222;"></div>
<div class="m" style="left:1660.40px;top:532.32px;height:26px;line-height:26px;font-size:21.01px;letter-spacing:-0.673px;color:#222;width:254.30px;text-align:center;">DL_SDU - Byte13 0x45</div>
<div style="left:1401.60px;top:565.52px;width:255.20px;height:37.30px;background:#add8e6;border:1.2px solid #557079;"></div>
<div class="m" style="left:1401.60px;top:572.90px;height:26px;line-height:26px;font-size:21.01px;letter-spacing:-0.673px;color:#222;width:255.20px;text-align:center;">DL_SDU - Byte14 0x46</div>
<div style="left:1660.40px;top:565.52px;width:254.30px;height:37.30px;background:#add8e6;border:1.2px solid #557079;"></div>
<div class="m" style="left:1660.40px;top:572.90px;height:26px;line-height:26px;font-size:21.01px;letter-spacing:-0.673px;color:#222;width:254.30px;text-align:center;">DL_SDU - Byte15 0x47</div>
<div style="left:1918.20px;top:198.00px;width:22.80px;height:406.00px;background:#f0f0f0;"></div>
<div style="left:1918.20px;top:222.30px;width:22.80px;height:9.60px;background:#cdcdcd;"></div>
<svg style="left:1918px;top:198px" width="23" height="406" viewBox="0 0 23 406"><path d="M7 16 L11.5 11.2 L16 16" fill="none" stroke="#606060" stroke-width="1.2"/><path d="M7 391 L11.5 395.8 L16 391" fill="none" stroke="#606060" stroke-width="1.2"/></svg>
<div style="left:1364.80px;top:652.50px;width:579.20px;height:4.30px;background:#6384fd;border-radius:4px 4px 0 0;"></div>
<div style="left:1365.20px;top:656.30px;width:578.40px;height:442.70px;background:#fff;border:1px solid #a8a8a8;border-bottom:none;"></div>
<div style="left:1364.80px;top:1099.00px;width:579.20px;height:5.50px;background:#6384fd;border-radius:0 0 4px 4px;"></div>
<div style="left:1369.00px;top:618.40px;width:179.90px;height:33.30px;background:#6384fd;border-radius:4.5px 5px 0 0;border-right:1px solid #e3eafd;border-bottom:1.3px solid #e3eafd;"></div>
<div class="m" style="left:1378.60px;top:626.98px;height:20px;line-height:20px;font-size:15.49px;letter-spacing:-0.496px;color:#fff;">SymbolsView_DEVICE</div>
<div style="left:1550.00px;top:618.40px;width:135.50px;height:35.60px;background:#6384fd;border-radius:4.5px 4.5px 0 0;"></div>
<div class="m" style="left:1559.50px;top:626.98px;height:20px;line-height:20px;font-size:15.49px;letter-spacing:-0.496px;color:#fff;">UFS-FrameView</div>
<svg style="left:1929.9px;top:628.8px" width="12" height="12" viewBox="0 0 12 12"><rect x="0" y="0" width="11" height="2.2" fill="#c9cfdb"/><path d="M0 5.2 H11 L5.5 11.2Z" fill="#c9cfdb"/></svg>
<div style="left:1370.90px;top:662.30px;width:15.70px;height:26.50px;background:#fff;border:1.1px solid #222;"></div>
<div class="m" style="left:1350.90px;top:667.03px;width:55.70px;height:22px;line-height:22px;font-size:17.04px;letter-spacing:-0.546px;color:#111;text-align:center;transform:scaleX(0.63);">31</div>
<div style="left:1388.69px;top:662.30px;width:15.70px;height:26.50px;background:#fff;border:1.1px solid #222;"></div>
<div class="m" style="left:1368.69px;top:667.03px;width:55.70px;height:22px;line-height:22px;font-size:17.04px;letter-spacing:-0.546px;color:#111;text-align:center;transform:scaleX(0.63);">30</div>
<div style="left:1406.48px;top:662.30px;width:15.70px;height:26.50px;background:#fff;border:1.1px solid #222;"></div>
<div class="m" style="left:1386.48px;top:667.03px;width:55.70px;height:22px;line-height:22px;font-size:17.04px;letter-spacing:-0.546px;color:#111;text-align:center;transform:scaleX(0.63);">29</div>
<div style="left:1424.27px;top:662.30px;width:15.70px;height:26.50px;background:#fff;border:1.1px solid #222;"></div>
<div class="m" style="left:1404.27px;top:667.03px;width:55.70px;height:22px;line-height:22px;font-size:17.04px;letter-spacing:-0.546px;color:#111;text-align:center;transform:scaleX(0.63);">28</div>
<div style="left:1442.06px;top:662.30px;width:15.70px;height:26.50px;background:#fff;border:1.1px solid #222;"></div>
<div class="m" style="left:1422.06px;top:667.03px;width:55.70px;height:22px;line-height:22px;font-size:17.04px;letter-spacing:-0.546px;color:#111;text-align:center;transform:scaleX(0.63);">27</div>
<div style="left:1459.85px;top:662.30px;width:15.70px;height:26.50px;background:#fff;border:1.1px solid #222;"></div>
<div class="m" style="left:1439.85px;top:667.03px;width:55.70px;height:22px;line-height:22px;font-size:17.04px;letter-spacing:-0.546px;color:#111;text-align:center;transform:scaleX(0.63);">26</div>
<div style="left:1477.64px;top:662.30px;width:15.70px;height:26.50px;background:#fff;border:1.1px solid #222;"></div>
<div class="m" style="left:1457.64px;top:667.03px;width:55.70px;height:22px;line-height:22px;font-size:17.04px;letter-spacing:-0.546px;color:#111;text-align:center;transform:scaleX(0.63);">25</div>
<div style="left:1495.43px;top:662.30px;width:15.70px;height:26.50px;background:#fff;border:1.1px solid #222;"></div>
<div class="m" style="left:1475.43px;top:667.03px;width:55.70px;height:22px;line-height:22px;font-size:17.04px;letter-spacing:-0.546px;color:#111;text-align:center;transform:scaleX(0.63);">24</div>
<div style="left:1513.22px;top:662.30px;width:15.70px;height:26.50px;background:#fff;border:1.1px solid #222;"></div>
<div class="m" style="left:1493.22px;top:667.03px;width:55.70px;height:22px;line-height:22px;font-size:17.04px;letter-spacing:-0.546px;color:#111;text-align:center;transform:scaleX(0.63);">23</div>
<div style="left:1531.01px;top:662.30px;width:15.70px;height:26.50px;background:#fff;border:1.1px solid #222;"></div>
<div class="m" style="left:1511.01px;top:667.03px;width:55.70px;height:22px;line-height:22px;font-size:17.04px;letter-spacing:-0.546px;color:#111;text-align:center;transform:scaleX(0.63);">22</div>
<div style="left:1548.80px;top:662.30px;width:15.70px;height:26.50px;background:#fff;border:1.1px solid #222;"></div>
<div class="m" style="left:1528.80px;top:667.03px;width:55.70px;height:22px;line-height:22px;font-size:17.04px;letter-spacing:-0.546px;color:#111;text-align:center;transform:scaleX(0.63);">21</div>
<div style="left:1566.59px;top:662.30px;width:15.70px;height:26.50px;background:#fff;border:1.1px solid #222;"></div>
<div class="m" style="left:1546.59px;top:667.03px;width:55.70px;height:22px;line-height:22px;font-size:17.04px;letter-spacing:-0.546px;color:#111;text-align:center;transform:scaleX(0.63);">20</div>
<div style="left:1584.38px;top:662.30px;width:15.70px;height:26.50px;background:#fff;border:1.1px solid #222;"></div>
<div class="m" style="left:1564.38px;top:667.03px;width:55.70px;height:22px;line-height:22px;font-size:17.04px;letter-spacing:-0.546px;color:#111;text-align:center;transform:scaleX(0.63);">19</div>
<div style="left:1602.17px;top:662.30px;width:15.70px;height:26.50px;background:#fff;border:1.1px solid #222;"></div>
<div class="m" style="left:1582.17px;top:667.03px;width:55.70px;height:22px;line-height:22px;font-size:17.04px;letter-spacing:-0.546px;color:#111;text-align:center;transform:scaleX(0.63);">18</div>
<div style="left:1619.96px;top:662.30px;width:15.70px;height:26.50px;background:#fff;border:1.1px solid #222;"></div>
<div class="m" style="left:1599.96px;top:667.03px;width:55.70px;height:22px;line-height:22px;font-size:17.04px;letter-spacing:-0.546px;color:#111;text-align:center;transform:scaleX(0.63);">17</div>
<div style="left:1637.75px;top:662.30px;width:15.70px;height:26.50px;background:#fff;border:1.1px solid #222;"></div>
<div class="m" style="left:1617.75px;top:667.03px;width:55.70px;height:22px;line-height:22px;font-size:17.04px;letter-spacing:-0.546px;color:#111;text-align:center;transform:scaleX(0.63);">16</div>
<div style="left:1655.54px;top:662.30px;width:15.70px;height:26.50px;background:#fff;border:1.1px solid #222;"></div>
<div class="m" style="left:1635.54px;top:667.03px;width:55.70px;height:22px;line-height:22px;font-size:17.04px;letter-spacing:-0.546px;color:#111;text-align:center;transform:scaleX(0.63);">15</div>
<div style="left:1673.33px;top:662.30px;width:15.70px;height:26.50px;background:#fff;border:1.1px solid #222;"></div>
<div class="m" style="left:1653.33px;top:667.03px;width:55.70px;height:22px;line-height:22px;font-size:17.04px;letter-spacing:-0.546px;color:#111;text-align:center;transform:scaleX(0.63);">14</div>
<div style="left:1691.12px;top:662.30px;width:15.70px;height:26.50px;background:#fff;border:1.1px solid #222;"></div>
<div class="m" style="left:1671.12px;top:667.03px;width:55.70px;height:22px;line-height:22px;font-size:17.04px;letter-spacing:-0.546px;color:#111;text-align:center;transform:scaleX(0.63);">13</div>
<div style="left:1708.91px;top:662.30px;width:15.70px;height:26.50px;background:#fff;border:1.1px solid #222;"></div>
<div class="m" style="left:1688.91px;top:667.03px;width:55.70px;height:22px;line-height:22px;font-size:17.04px;letter-spacing:-0.546px;color:#111;text-align:center;transform:scaleX(0.63);">12</div>
<div style="left:1726.70px;top:662.30px;width:15.70px;height:26.50px;background:#fff;border:1.1px solid #222;"></div>
<div class="m" style="left:1706.70px;top:667.03px;width:55.70px;height:22px;line-height:22px;font-size:17.04px;letter-spacing:-0.546px;color:#111;text-align:center;transform:scaleX(0.63);">11</div>
<div style="left:1744.49px;top:662.30px;width:15.70px;height:26.50px;background:#fff;border:1.1px solid #222;"></div>
<div class="m" style="left:1724.49px;top:667.03px;width:55.70px;height:22px;line-height:22px;font-size:17.04px;letter-spacing:-0.546px;color:#111;text-align:center;transform:scaleX(0.63);">10</div>
<div style="left:1762.28px;top:662.30px;width:15.70px;height:26.50px;background:#fff;border:1.1px solid #222;"></div>
<div class="m" style="left:1742.28px;top:667.03px;width:55.70px;height:22px;line-height:22px;font-size:17.04px;letter-spacing:-0.546px;color:#111;text-align:center;transform:scaleX(0.63);">9</div>
<div style="left:1780.07px;top:662.30px;width:15.70px;height:26.50px;background:#fff;border:1.1px solid #222;"></div>
<div class="m" style="left:1760.07px;top:667.03px;width:55.70px;height:22px;line-height:22px;font-size:17.04px;letter-spacing:-0.546px;color:#111;text-align:center;transform:scaleX(0.63);">8</div>
<div style="left:1797.86px;top:662.30px;width:15.70px;height:26.50px;background:#fff;border:1.1px solid #222;"></div>
<div class="m" style="left:1777.86px;top:667.03px;width:55.70px;height:22px;line-height:22px;font-size:17.04px;letter-spacing:-0.546px;color:#111;text-align:center;transform:scaleX(0.63);">7</div>
<div style="left:1815.65px;top:662.30px;width:15.70px;height:26.50px;background:#fff;border:1.1px solid #222;"></div>
<div class="m" style="left:1795.65px;top:667.03px;width:55.70px;height:22px;line-height:22px;font-size:17.04px;letter-spacing:-0.546px;color:#111;text-align:center;transform:scaleX(0.63);">6</div>
<div style="left:1833.44px;top:662.30px;width:15.70px;height:26.50px;background:#fff;border:1.1px solid #222;"></div>
<div class="m" style="left:1813.44px;top:667.03px;width:55.70px;height:22px;line-height:22px;font-size:17.04px;letter-spacing:-0.546px;color:#111;text-align:center;transform:scaleX(0.63);">5</div>
<div style="left:1851.23px;top:662.30px;width:15.70px;height:26.50px;background:#fff;border:1.1px solid #222;"></div>
<div class="m" style="left:1831.23px;top:667.03px;width:55.70px;height:22px;line-height:22px;font-size:17.04px;letter-spacing:-0.546px;color:#111;text-align:center;transform:scaleX(0.63);">4</div>
<div style="left:1869.02px;top:662.30px;width:15.70px;height:26.50px;background:#fff;border:1.1px solid #222;"></div>
<div class="m" style="left:1849.02px;top:667.03px;width:55.70px;height:22px;line-height:22px;font-size:17.04px;letter-spacing:-0.546px;color:#111;text-align:center;transform:scaleX(0.63);">3</div>
<div style="left:1886.81px;top:662.30px;width:15.70px;height:26.50px;background:#fff;border:1.1px solid #222;"></div>
<div class="m" style="left:1866.81px;top:667.03px;width:55.70px;height:22px;line-height:22px;font-size:17.04px;letter-spacing:-0.546px;color:#111;text-align:center;transform:scaleX(0.63);">2</div>
<div style="left:1904.60px;top:662.30px;width:15.70px;height:26.50px;background:#fff;border:1.1px solid #222;"></div>
<div class="m" style="left:1884.60px;top:667.03px;width:55.70px;height:22px;line-height:22px;font-size:17.04px;letter-spacing:-0.546px;color:#111;text-align:center;transform:scaleX(0.63);">1</div>
<div style="left:1922.39px;top:662.30px;width:15.70px;height:26.50px;background:#fff;border:1.1px solid #222;"></div>
<div class="m" style="left:1902.39px;top:667.03px;width:55.70px;height:22px;line-height:22px;font-size:17.04px;letter-spacing:-0.546px;color:#111;text-align:center;transform:scaleX(0.63);">0</div>
<div style="left:1369.10px;top:694.00px;width:14.50px;height:37.60px;background:#fff;border:1.2px solid #222;"></div>
<div style="left:1371.00px;top:711.60px;width:5.00px;height:1.20px;background:#aaa;"></div>
<div style="left:1377.00px;top:711.60px;width:5.00px;height:1.20px;background:#aaa;"></div>
<div style="left:1386.40px;top:694.00px;width:16.40px;height:37.60px;background:#fff;border:1.2px solid #222;"></div>
<div style="left:1388.50px;top:711.60px;width:5.00px;height:1.20px;background:#aaa;"></div>
<div style="left:1395.00px;top:711.60px;width:5.50px;height:1.20px;background:#aaa;"></div>
<div style="left:1404.60px;top:694.00px;width:104.20px;height:37.60px;background:#fff;border:1.2px solid #222;"></div>
<div class="m" style="left:1404.60px;top:705.17px;height:18px;line-height:18px;font-size:15.29px;letter-spacing:-0.490px;color:#222;width:104.20px;text-align:center;">NOP OUT 0x0</div>
<div style="left:1512.40px;top:694.00px;width:139.20px;height:37.60px;background:#fff;border:1.2px solid #222;"></div>
<div class="m" style="left:1512.40px;top:705.11px;height:18px;line-height:18px;font-size:14.33px;letter-spacing:-0.459px;color:#222;width:139.20px;text-align:center;">Flags[F(0) ] 0x1</div>
<div style="left:1655.40px;top:694.00px;width:139.30px;height:37.60px;background:#fff;border:1.2px solid #222;"></div>
<div class="m" style="left:1655.40px;top:706.93px;height:14px;line-height:14px;font-size:11.52px;letter-spacing:-0.369px;color:#333;width:139.30px;text-align:center;">LUN[WLUN_ID(0) ] 0x2</div>
<div style="left:1798.30px;top:694.00px;width:139.40px;height:37.60px;background:#fff;border:1.2px solid #222;"></div>
<div class="m" style="left:1798.30px;top:702.39px;height:24px;line-height:24px;font-size:18.68px;letter-spacing:-0.598px;color:#222;width:139.40px;text-align:center;">Task Tag 0x3</div>
<div style="left:1369.10px;top:734.20px;width:139.70px;height:37.40px;background:#fff;border:1.2px solid #222;"></div>
<div class="m" style="left:1369.10px;top:742.50px;height:24px;line-height:24px;font-size:18.97px;letter-spacing:-0.608px;color:#222;width:139.70px;text-align:center;">Reserved 0x4</div>
<div style="left:1512.40px;top:734.20px;width:139.20px;height:37.40px;background:#fff;border:1.2px solid #222;"></div>
<div class="m" style="left:1512.40px;top:742.50px;height:24px;line-height:24px;font-size:18.97px;letter-spacing:-0.608px;color:#222;width:139.20px;text-align:center;">Reserved 0x5</div>
<div style="left:1655.40px;top:734.20px;width:139.30px;height:37.40px;background:#fff;border:1.2px solid #222;"></div>
<div class="m" style="left:1655.40px;top:742.50px;height:24px;line-height:24px;font-size:18.97px;letter-spacing:-0.608px;color:#222;width:139.30px;text-align:center;">Reserved 0x6</div>
<div style="left:1798.30px;top:734.20px;width:139.40px;height:37.40px;background:#fff;border:1.2px solid #222;"></div>
<div class="m" style="left:1798.30px;top:742.50px;height:24px;line-height:24px;font-size:18.97px;letter-spacing:-0.608px;color:#222;width:139.40px;text-align:center;">Reserved 0x7</div>
<div style="left:1369.10px;top:775.20px;width:139.70px;height:37.40px;background:#fff;border:1.2px solid #222;"></div>
<div class="m" style="left:1369.10px;top:788.04px;height:14px;line-height:14px;font-size:11.62px;letter-spacing:-0.372px;color:#333;width:139.70px;text-align:center;">Total EHS Length 0x8</div>
<div style="left:1512.40px;top:775.20px;width:139.20px;height:37.40px;background:#fff;border:1.2px solid #222;"></div>
<div class="m" style="left:1512.40px;top:783.50px;height:24px;line-height:24px;font-size:18.97px;letter-spacing:-0.608px;color:#222;width:139.20px;text-align:center;">Reserved 0x9</div>
<div style="left:1655.40px;top:775.20px;width:282.30px;height:37.40px;background:#fff;border:1.2px solid #222;"></div>
<div class="m" style="left:1655.40px;top:783.51px;height:24px;line-height:24px;font-size:19.07px;letter-spacing:-0.611px;color:#222;width:282.30px;text-align:center;">Data Segment Length 0xA0B</div>
<div style="left:0.00px;top:1112.00px;width:1951.00px;height:42.00px;background:#f1edec;"></div>
<div class="s" style="left:4.60px;top:1124.00px;height:20px;line-height:20px;font-size:16.00px;letter-spacing:-0.905px;color:#111;">1.8.7.2</div>
<div style="left:73.80px;top:1125.50px;width:14.00px;height:14.00px;background:#808080;border-radius:50%;"></div>
<div class="s" style="left:97.80px;top:1124.00px;height:20px;line-height:20px;font-size:16.00px;letter-spacing:-0.499px;color:#111;">Received: 0</div>
<div style="left:187.30px;top:1124.00px;width:1.00px;height:19.00px;background:#b5b5b5;"></div>
<div class="s" style="left:198.40px;top:1124.00px;height:20px;line-height:20px;font-size:16.00px;letter-spacing:-0.216px;color:#111;">Current Mem: 0.000GB</div>
<div class="s" style="left:368.20px;top:1124.00px;height:20px;line-height:20px;font-size:16.00px;letter-spacing:-0.385px;color:#111;">T - 3_2_3 (FAIL) Kioxia#02</div>
<div class="s" style="left:1776.00px;top:1124.00px;height:20px;line-height:20px;font-size:16.00px;letter-spacing:-0.036px;color:#000;font-weight:bold;">Trigger Type: Advance</div>
<svg style="left:0;top:0;pointer-events:none" width="1951" height="1154" viewBox="0 0 1951 1154"><polygon points="593,543 702,626 593,708 484,626" fill="rgba(0,0,0,0.040)"/><polygon points="484,626 593,708 593,749 484,667" fill="rgba(0,0,0,0.075)"/><polygon points="702,626 593,708 593,749 702,667" fill="rgba(0,0,0,0.055)"/><polygon points="593,582 651,626 593,670 535,626" fill="none" stroke="rgba(255,255,255,0.35)" stroke-width="5"/><path d="M593 590 V 745" stroke="rgba(255,255,255,0.3)" stroke-width="4"/><polygon points="763,543 872,626 763,708 654,626" fill="rgba(0,0,0,0.040)"/><polygon points="654,626 763,708 763,749 654,667" fill="rgba(0,0,0,0.075)"/><polygon points="872,626 763,708 763,749 872,667" fill="rgba(0,0,0,0.055)"/><polygon points="763,582 821,626 763,670 705,626" fill="none" stroke="rgba(255,255,255,0.35)" stroke-width="5"/><path d="M763 590 V 745" stroke="rgba(255,255,255,0.3)" stroke-width="4"/><g opacity="0.062" fill="#000" stroke="#000"><text x="950" y="680" font-family="Liberation Serif" font-size="200" stroke-width="3" transform="translate(950 0) scale(1.09 1) translate(-950 0)">Prodigy</text><text x="933" y="766" font-family="Liberation Sans" font-weight="bold" font-size="50" letter-spacing="24.5" stroke-width="2.5" transform="translate(933 0) scale(0.68 1) translate(-933 0)">TECHNOVATIONS</text></g></svg>
</body></html>
